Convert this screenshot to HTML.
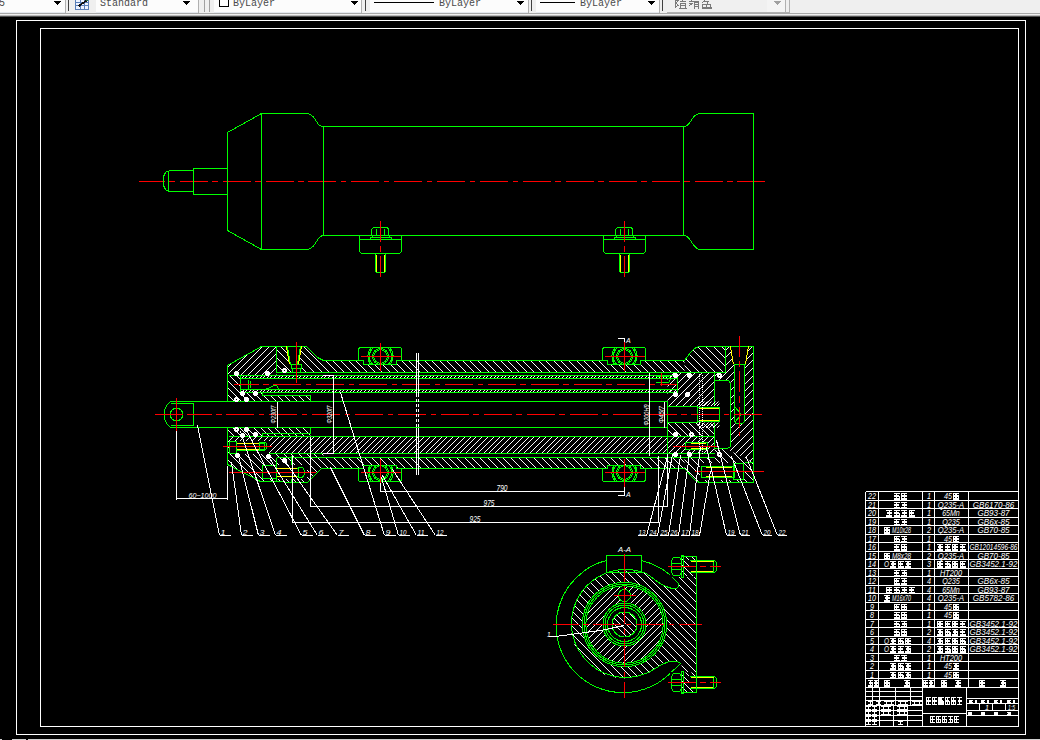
<!DOCTYPE html>
<html><head><meta charset="utf-8"><style>
html,body{margin:0;padding:0;background:#000;width:1040px;height:740px;overflow:hidden;position:relative;font-family:"Liberation Sans",sans-serif}
</style></head><body>
<svg width="1040" height="17" style="position:absolute;left:0;top:0" shape-rendering="crispEdges"><rect x="0" y="0" width="1040" height="13" fill="#efefef"/><rect x="0" y="13" width="1040" height="1" fill="#a8a8a8"/><rect x="0" y="14" width="1040" height="1" fill="#f0f0f0"/><rect x="0" y="15" width="1040" height="1" fill="#b8b8b8"/><rect x="0" y="16" width="1040" height="1" fill="#505050"/><rect x="0" y="0" width="65" height="12" fill="#fcfcfc"/><rect x="0" y="12" width="65" height="1" fill="#e4e8ee"/><rect x="65" y="0" width="1" height="13" fill="#b0b0b0"/><text x="-1" y="6" font-family="Liberation Mono, monospace" font-size="10" fill="#4a4a4a">5</text><path d="M54,1 h7 l-3.5,4z" fill="#000"/><rect x="68" y="0" width="1" height="11" fill="#404040"/><rect x="75" y="0" width="14" height="10" fill="#5a7fb8"/><rect x="76" y="0" width="4" height="2" fill="#eef3ff"/><rect x="76" y="3" width="4" height="2" fill="#eef3ff"/><rect x="76" y="6" width="4" height="2.5" fill="#eef3ff"/><rect x="81" y="0" width="3" height="2" fill="#eef3ff"/><rect x="81" y="3" width="3" height="2" fill="#eef3ff"/><rect x="81" y="6" width="3" height="2.5" fill="#eef3ff"/><rect x="85" y="0" width="3" height="2" fill="#eef3ff"/><rect x="85" y="3" width="3" height="2" fill="#eef3ff"/><rect x="85" y="6" width="3" height="2.5" fill="#eef3ff"/><path d="M78,5.5 L86,0 L87.5,0.8 L79.5,6.5z" fill="#111"/><rect x="86" y="0" width="2" height="1" fill="#2a6a3a"/><rect x="96" y="0" width="102" height="12" fill="#fcfcfc"/><rect x="96" y="12" width="102" height="1" fill="#e4e8ee"/><rect x="198" y="0" width="1" height="13" fill="#b0b0b0"/><text x="100" y="6" font-family="Liberation Mono, monospace" font-size="10" fill="#4a4a4a">Standard</text><path d="M183,1 h7 l-3.5,4z" fill="#000"/><rect x="204" y="0" width="1" height="12" fill="#a0a0a0"/><rect x="209" y="0" width="1" height="12" fill="#a0a0a0"/><rect x="214" y="0" width="147" height="12" fill="#fcfcfc"/><rect x="214" y="12" width="147" height="1" fill="#e4e8ee"/><rect x="361" y="0" width="1" height="13" fill="#b0b0b0"/><rect x="219.5" y="-3.5" width="9" height="10" fill="#fff" stroke="#000"/><text x="233" y="6" font-family="Liberation Mono, monospace" font-size="10" fill="#4a4a4a">ByLayer</text><path d="M351,1 h7 l-3.5,4z" fill="#000"/><rect x="365" y="0" width="1" height="11" fill="#404040"/><rect x="370" y="0" width="158" height="12" fill="#fcfcfc"/><rect x="370" y="12" width="158" height="1" fill="#e4e8ee"/><rect x="528" y="0" width="1" height="13" fill="#b0b0b0"/><rect x="374" y="2" width="60" height="1" fill="#000"/><text x="439" y="6" font-family="Liberation Mono, monospace" font-size="10" fill="#4a4a4a">ByLayer</text><path d="M517,1 h7 l-3.5,4z" fill="#000"/><rect x="531" y="0" width="1" height="11" fill="#404040"/><rect x="536" y="0" width="123" height="12" fill="#fcfcfc"/><rect x="536" y="12" width="123" height="1" fill="#e4e8ee"/><rect x="659" y="0" width="1" height="13" fill="#b0b0b0"/><rect x="540" y="2" width="35" height="1" fill="#000"/><text x="580" y="6" font-family="Liberation Mono, monospace" font-size="10" fill="#4a4a4a">ByLayer</text><path d="M648,1 h7 l-3.5,4z" fill="#000"/><rect x="662" y="0" width="1" height="11" fill="#404040"/><rect x="667" y="0" width="118" height="12" fill="#f0f0f0"/><rect x="767" y="0" width="18" height="12" fill="#f4f4f4"/><rect x="785" y="0" width="1" height="13" fill="#b0b0b0"/><rect x="789" y="0" width="1" height="13" fill="#b0b0b0"/><rect x="667" y="12" width="123" height="1" fill="#b0b0b0"/><path d="M774,1 h7 l-3.5,4z" fill="#a0a0a0"/><path d="M675.5,0v8M675.5,0.5h2.5l-1.5,2.5l1.5,2.5l-2,1.5M679.5,1.5h6M682.5,0v2M680,3.5h5v4.5h-5zM680,5.5h5M679,8.5h8M688.5,1.5h5M691,0v2M689,3h4l-4,3M693.5,1h5M696,1v1.5M694.5,2.5h4v4h-4zM694.5,4.5h4M695,7l-1,1.5M698,7l1,1.5M704.5,0l-2,3M703.5,1.5h5l-1.5,2M702.5,4h8v3.5h-8zM706.5,4v3.5M702.5,7.5v0.5h9v-1.5" stroke="#7a7a7a" stroke-width="1" fill="none" shape-rendering="crispEdges"/></svg>
<svg width="1040" height="723" viewBox="0 17 1040 723" style="position:absolute;left:0;top:17px" shape-rendering="crispEdges" font-family="Liberation Sans, sans-serif"><defs><clipPath id="h1"><path clip-rule="evenodd" d="M227.5,365.5L261.5,346.5L276.5,346.5L276.5,375.5L227.5,375.5Z"/></clipPath><clipPath id="h2"><path clip-rule="evenodd" d="M276.5,346.5L306.5,346.5L317.5,357.5L323.5,360.5L684.5,360.5L684.5,372.5L276.5,372.5ZM286.5,346.5L301.5,346.5L298.5,364.5L301.5,364.5L301.5,372.5L291.5,372.5L291.5,364.5L289.5,364.5Z"/></clipPath><clipPath id="h3"><path clip-rule="evenodd" d="M684.5,360.5 C688.5,356 690,352 694,349 C696,347 698,346.5 700.5,346.5 L725.5,346.5 L725.5,372.5 L684.5,372.5Z"/></clipPath><clipPath id="h4"><path clip-rule="evenodd" d="M240.5,375.5L677.5,375.5L677.5,378.5L240.5,378.5Z"/></clipPath><clipPath id="h5"><path clip-rule="evenodd" d="M240.5,389.5L677.5,389.5L677.5,392.5L240.5,392.5Z"/></clipPath><clipPath id="h6"><path clip-rule="evenodd" d="M227.5,375.5L240.5,375.5L240.5,392.5L262.5,392.5L262.5,395.5L310.5,395.5L310.5,401.5L227.5,401.5Z"/></clipPath><clipPath id="h7"><path clip-rule="evenodd" d="M227.5,427.5L310.5,427.5L310.5,436.5L227.5,436.5Z"/></clipPath><clipPath id="h8"><path clip-rule="evenodd" d="M227.5,436.5L714.5,436.5L714.5,453.5L227.5,453.5Z"/></clipPath><clipPath id="h9"><path clip-rule="evenodd" d="M227.5,453.5L323.5,453.5L323.5,457.5L684.5,457.5L684.5,468.5L321.5,468.5L307.5,482.5L260.5,482.5L227.5,464.5Z"/></clipPath><clipPath id="h10"><path clip-rule="evenodd" d="M684.5,468.5 C688.5,472 690,476 694,479 C696,481 698,482.5 700.5,482.5 L753.5,482.5 L753.5,462.5 L725.5,448.5 L714.5,448.5 L714.5,457.5 L684.5,457.5Z"/></clipPath><clipPath id="h11"><path clip-rule="evenodd" d="M667.5,372.5L714.5,372.5L714.5,406.5L667.5,406.5Z"/></clipPath><clipPath id="h12"><path clip-rule="evenodd" d="M667.5,422.5L714.5,422.5L714.5,436.5L667.5,436.5Z"/></clipPath><clipPath id="h13"><path clip-rule="evenodd" d="M714.5,372.5L725.5,372.5L725.5,346.5L753.5,346.5L753.5,462.5L725.5,448.5L714.5,448.5ZM714.5,380.5L730.5,380.5L730.5,448.5L714.5,448.5ZM734.5,364.5L744.5,364.5L744.5,423.5L734.5,423.5ZM730.5,346.5L748.5,346.5L745.5,364.5L733.5,364.5Z"/></clipPath><clipPath id="h14"><rect x="360" y="348" width="41" height="16"/></clipPath><clipPath id="h15"><rect x="360" y="465" width="41" height="16"/></clipPath><clipPath id="h16"><rect x="604" y="348" width="41" height="16"/></clipPath><clipPath id="h17"><rect x="604" y="465" width="41" height="16"/></clipPath><clipPath id="h18"><path clip-rule="evenodd" d="M697.5,401.5L719.5,401.5L719.5,406.5L697.5,406.5Z"/></clipPath><clipPath id="h19"><path clip-rule="evenodd" d="M697.5,422.5L719.5,422.5L719.5,428.5L697.5,428.5Z"/></clipPath><clipPath id="h20"><path d="M570.5,624.5a54,54 0 1,0 108,0a54,54 0 1,0 -108,0Z"/><path d="M643.5,572.5 L681.5,572.5 L681.5,556.5 L696.5,556.5 L696.5,692.5 L681.5,692.5 L681.5,664 C678,661 672,660.5 668,662 C663,663.5 659,666 656,668 L624,624Z"/></clipPath><mask id="h21"><rect x="0" y="0" width="1040" height="740" fill="#fff"/><circle cx="624.5" cy="624.5" r="42" fill="#000"/><path d="M641,560 A67,67 0 0,1 677.5,582.5 C680,585.5 679,588 675,588.5 C669,589 661,585 650,576 C647,574 645,573 643.5,572 Z" fill="#000"/></mask><mask id="h22"><circle cx="624.5" cy="624.5" r="38.7" fill="#fff"/><circle cx="624.5" cy="624.5" r="21" fill="#000"/><circle cx="624.5" cy="595.5" r="6" fill="#000"/></mask><clipPath id="h23"><circle cx="624.5" cy="624.5" r="12.5"/></clipPath><clipPath id="h24"><path clip-rule="evenodd" d="M681.5,556.5L696.5,556.5L696.5,576.5L681.5,576.5Z"/></clipPath><clipPath id="h25"><path clip-rule="evenodd" d="M681.5,672.5L696.5,672.5L696.5,692.5L681.5,692.5Z"/></clipPath></defs><rect x="16.5" y="20.5" width="1009" height="714" fill="none" stroke="#ffffff"/><rect x="40.5" y="28.5" width="978" height="698" fill="none" stroke="#ffffff"/><line x1="138.5" y1="181.5" x2="764.5" y2="181.5" stroke="#ff0000" stroke-dasharray="28 4.5 5.5 4.9" stroke-dashoffset="1.7"/><path d="M168.5,170.5 L165.5,172.5 L163.5,176.5 L163.5,185.5 L165.5,189.5 L168.5,191.5" fill="none" stroke="#00ff00"/><polyline points="168.5,170.5 193.5,170.5" fill="none" stroke="#00ff00"/><polyline points="168.5,191.5 193.5,191.5" fill="none" stroke="#00ff00"/><line x1="168.5" y1="170.5" x2="168.5" y2="191.5" stroke="#00ff00"/><rect x="193.5" y="168.5" width="34" height="26" fill="none" stroke="#00ff00"/><polyline points="227.5,132.5 261.5,113.5 306.5,113.5" fill="none" stroke="#00ff00"/><polyline points="227.5,230.5 261.5,249.5 306.5,249.5" fill="none" stroke="#00ff00"/><line x1="227.5" y1="132.5" x2="227.5" y2="230.5" stroke="#00ff00"/><line x1="261.5" y1="113.5" x2="261.5" y2="249.5" stroke="#00ff00"/><path d="M306.5,113.5 C312.5,113.5 314.5,118.5 316.5,121.5 C318.5,124.5 319.5,126.5 323.5,126.5" fill="none" stroke="#00ff00"/><path d="M306.5,249.5 C312.5,249.5 314.5,244.5 316.5,241.5 C318.5,238.5 319.5,235.5 323.5,235.5" fill="none" stroke="#00ff00"/><line x1="323.5" y1="126.5" x2="683.5" y2="126.5" stroke="#00ff00"/><line x1="323.5" y1="235.5" x2="683.5" y2="235.5" stroke="#00ff00"/><line x1="323.5" y1="126.5" x2="323.5" y2="235.5" stroke="#00ff00"/><line x1="683.5" y1="126.5" x2="683.5" y2="235.5" stroke="#00ff00"/><path d="M683.5,126.5 C688.5,126.5 690.5,121.5 692.5,118.5 C694.5,115.5 696.5,113.5 700.5,113.5" fill="none" stroke="#00ff00"/><path d="M683.5,235.5 C688.5,235.5 690.5,240.5 692.5,243.5 C694.5,246.5 696.5,249.5 700.5,249.5" fill="none" stroke="#00ff00"/><polyline points="700.5,113.5 753.5,113.5 753.5,249.5 700.5,249.5" fill="none" stroke="#00ff00"/><polyline points="359.5,235.5 359.5,251.5 361.5,253.5 399.5,253.5 401.5,251.5 401.5,235.5" fill="none" stroke="#00ff00"/><line x1="359.5" y1="239.5" x2="401.5" y2="239.5" stroke="#00ff00"/><polyline points="371.5,235.5 371.5,229.5 373.5,227.5 387.5,227.5 388.5,229.5 388.5,235.5" fill="none" stroke="#00ff00"/><line x1="376.5" y1="228.5" x2="376.5" y2="235.5" stroke="#00ff00"/><line x1="384.5" y1="228.5" x2="384.5" y2="235.5" stroke="#00ff00"/><rect x="372.5" y="235.5" width="17" height="2" fill="none" stroke="#00ff00"/><rect x="370.5" y="237.5" width="21" height="2" fill="none" stroke="#00ff00"/><polyline points="375.5,253.5 375.5,271.5 376.5,272.5 384.5,272.5 385.5,271.5 385.5,253.5" fill="none" stroke="#00ff00"/><line x1="376.5" y1="254.5" x2="376.5" y2="271.5" stroke="#ffff00"/><line x1="384.5" y1="254.5" x2="384.5" y2="271.5" stroke="#ffff00"/><line x1="380.5" y1="220.5" x2="380.5" y2="277.5" stroke="#ff0000" stroke-dasharray="21 4 6.6 4" stroke-dashoffset="0"/><polyline points="603.5,235.5 603.5,251.5 605.5,253.5 643.5,253.5 645.5,251.5 645.5,235.5" fill="none" stroke="#00ff00"/><line x1="603.5" y1="239.5" x2="645.5" y2="239.5" stroke="#00ff00"/><polyline points="615.5,235.5 615.5,229.5 617.5,227.5 631.5,227.5 632.5,229.5 632.5,235.5" fill="none" stroke="#00ff00"/><line x1="620.5" y1="228.5" x2="620.5" y2="235.5" stroke="#00ff00"/><line x1="628.5" y1="228.5" x2="628.5" y2="235.5" stroke="#00ff00"/><rect x="616.5" y="235.5" width="17" height="2" fill="none" stroke="#00ff00"/><rect x="614.5" y="237.5" width="21" height="2" fill="none" stroke="#00ff00"/><polyline points="619.5,253.5 619.5,271.5 620.5,272.5 628.5,272.5 629.5,271.5 629.5,253.5" fill="none" stroke="#00ff00"/><line x1="620.5" y1="254.5" x2="620.5" y2="271.5" stroke="#ffff00"/><line x1="628.5" y1="254.5" x2="628.5" y2="271.5" stroke="#ffff00"/><line x1="624.5" y1="220.5" x2="624.5" y2="277.5" stroke="#ff0000" stroke-dasharray="21 4 6.6 4" stroke-dashoffset="0"/><path clip-path="url(#h1)" d="M198.5,375.5L227.5,346.5M205.5,375.5L234.5,346.5M212.5,375.5L241.5,346.5M219.5,375.5L248.5,346.5M226.5,375.5L255.5,346.5M233.5,375.5L262.5,346.5M240.5,375.5L269.5,346.5M247.5,375.5L276.5,346.5M254.5,375.5L283.5,346.5M261.5,375.5L290.5,346.5M268.5,375.5L297.5,346.5M275.5,375.5L304.5,346.5M282.5,375.5L311.5,346.5" stroke="#ffffff" stroke-width="1" fill="none"/><path clip-path="url(#h2)" d="M250.5,346.5L276.5,372.5M258.5,346.5L284.5,372.5M265.5,346.5L291.5,372.5M273.5,346.5L299.5,372.5M280.5,346.5L306.5,372.5M288.5,346.5L314.5,372.5M296.5,346.5L322.5,372.5M303.5,346.5L329.5,372.5M311.5,346.5L337.5,372.5M318.5,346.5L344.5,372.5M326.5,346.5L352.5,372.5M334.5,346.5L360.5,372.5M341.5,346.5L367.5,372.5M349.5,346.5L375.5,372.5M356.5,346.5L382.5,372.5M364.5,346.5L390.5,372.5M372.5,346.5L398.5,372.5M379.5,346.5L405.5,372.5M387.5,346.5L413.5,372.5M394.5,346.5L420.5,372.5M402.5,346.5L428.5,372.5M410.5,346.5L436.5,372.5M417.5,346.5L443.5,372.5M425.5,346.5L451.5,372.5M432.5,346.5L458.5,372.5M440.5,346.5L466.5,372.5M448.5,346.5L474.5,372.5M455.5,346.5L481.5,372.5M463.5,346.5L489.5,372.5M470.5,346.5L496.5,372.5M478.5,346.5L504.5,372.5M486.5,346.5L512.5,372.5M493.5,346.5L519.5,372.5M501.5,346.5L527.5,372.5M508.5,346.5L534.5,372.5M516.5,346.5L542.5,372.5M524.5,346.5L550.5,372.5M531.5,346.5L557.5,372.5M539.5,346.5L565.5,372.5M546.5,346.5L572.5,372.5M554.5,346.5L580.5,372.5M562.5,346.5L588.5,372.5M569.5,346.5L595.5,372.5M577.5,346.5L603.5,372.5M584.5,346.5L610.5,372.5M592.5,346.5L618.5,372.5M600.5,346.5L626.5,372.5M607.5,346.5L633.5,372.5M615.5,346.5L641.5,372.5M622.5,346.5L648.5,372.5M630.5,346.5L656.5,372.5M638.5,346.5L664.5,372.5M645.5,346.5L671.5,372.5M653.5,346.5L679.5,372.5M660.5,346.5L686.5,372.5M668.5,346.5L694.5,372.5M676.5,346.5L702.5,372.5M683.5,346.5L709.5,372.5M691.5,346.5L717.5,372.5M698.5,346.5L724.5,372.5M706.5,346.5L732.5,372.5" stroke="#ffffff" stroke-width="1" fill="none"/><path clip-path="url(#h3)" d="M657.5,346.5L684.5,373.5M665.5,346.5L692.5,373.5M673.5,346.5L700.5,373.5M681.5,346.5L708.5,373.5M689.5,346.5L716.5,373.5M697.5,346.5L724.5,373.5M705.5,346.5L732.5,373.5M713.5,346.5L740.5,373.5M721.5,346.5L748.5,373.5M729.5,346.5L756.5,373.5" stroke="#ffffff" stroke-width="1" fill="none"/><path clip-path="url(#h4)" d="M237.5,378.5L240.5,375.5M241.5,378.5L244.5,375.5M244.5,378.5L247.5,375.5M248.5,378.5L251.5,375.5M251.5,378.5L254.5,375.5M255.5,378.5L258.5,375.5M259.5,378.5L262.5,375.5M262.5,378.5L265.5,375.5M266.5,378.5L269.5,375.5M269.5,378.5L272.5,375.5M273.5,378.5L276.5,375.5M277.5,378.5L280.5,375.5M280.5,378.5L283.5,375.5M284.5,378.5L287.5,375.5M287.5,378.5L290.5,375.5M291.5,378.5L294.5,375.5M295.5,378.5L298.5,375.5M298.5,378.5L301.5,375.5M302.5,378.5L305.5,375.5M305.5,378.5L308.5,375.5M309.5,378.5L312.5,375.5M313.5,378.5L316.5,375.5M316.5,378.5L319.5,375.5M320.5,378.5L323.5,375.5M323.5,378.5L326.5,375.5M327.5,378.5L330.5,375.5M331.5,378.5L334.5,375.5M334.5,378.5L337.5,375.5M338.5,378.5L341.5,375.5M341.5,378.5L344.5,375.5M345.5,378.5L348.5,375.5M349.5,378.5L352.5,375.5M352.5,378.5L355.5,375.5M356.5,378.5L359.5,375.5M359.5,378.5L362.5,375.5M363.5,378.5L366.5,375.5M367.5,378.5L370.5,375.5M370.5,378.5L373.5,375.5M374.5,378.5L377.5,375.5M377.5,378.5L380.5,375.5M381.5,378.5L384.5,375.5M385.5,378.5L388.5,375.5M388.5,378.5L391.5,375.5M392.5,378.5L395.5,375.5M395.5,378.5L398.5,375.5M399.5,378.5L402.5,375.5M403.5,378.5L406.5,375.5M406.5,378.5L409.5,375.5M410.5,378.5L413.5,375.5M413.5,378.5L416.5,375.5M417.5,378.5L420.5,375.5M421.5,378.5L424.5,375.5M424.5,378.5L427.5,375.5M428.5,378.5L431.5,375.5M431.5,378.5L434.5,375.5M435.5,378.5L438.5,375.5M439.5,378.5L442.5,375.5M442.5,378.5L445.5,375.5M446.5,378.5L449.5,375.5M449.5,378.5L452.5,375.5M453.5,378.5L456.5,375.5M457.5,378.5L460.5,375.5M460.5,378.5L463.5,375.5M464.5,378.5L467.5,375.5M467.5,378.5L470.5,375.5M471.5,378.5L474.5,375.5M475.5,378.5L478.5,375.5M478.5,378.5L481.5,375.5M482.5,378.5L485.5,375.5M485.5,378.5L488.5,375.5M489.5,378.5L492.5,375.5M493.5,378.5L496.5,375.5M496.5,378.5L499.5,375.5M500.5,378.5L503.5,375.5M503.5,378.5L506.5,375.5M507.5,378.5L510.5,375.5M511.5,378.5L514.5,375.5M514.5,378.5L517.5,375.5M518.5,378.5L521.5,375.5M521.5,378.5L524.5,375.5M525.5,378.5L528.5,375.5M529.5,378.5L532.5,375.5M532.5,378.5L535.5,375.5M536.5,378.5L539.5,375.5M539.5,378.5L542.5,375.5M543.5,378.5L546.5,375.5M547.5,378.5L550.5,375.5M550.5,378.5L553.5,375.5M554.5,378.5L557.5,375.5M557.5,378.5L560.5,375.5M561.5,378.5L564.5,375.5M565.5,378.5L568.5,375.5M568.5,378.5L571.5,375.5M572.5,378.5L575.5,375.5M575.5,378.5L578.5,375.5M579.5,378.5L582.5,375.5M583.5,378.5L586.5,375.5M586.5,378.5L589.5,375.5M590.5,378.5L593.5,375.5M593.5,378.5L596.5,375.5M597.5,378.5L600.5,375.5M601.5,378.5L604.5,375.5M604.5,378.5L607.5,375.5M608.5,378.5L611.5,375.5M611.5,378.5L614.5,375.5M615.5,378.5L618.5,375.5M619.5,378.5L622.5,375.5M622.5,378.5L625.5,375.5M626.5,378.5L629.5,375.5M629.5,378.5L632.5,375.5M633.5,378.5L636.5,375.5M637.5,378.5L640.5,375.5M640.5,378.5L643.5,375.5M644.5,378.5L647.5,375.5M647.5,378.5L650.5,375.5M651.5,378.5L654.5,375.5M655.5,378.5L658.5,375.5M658.5,378.5L661.5,375.5M662.5,378.5L665.5,375.5M665.5,378.5L668.5,375.5M669.5,378.5L672.5,375.5M673.5,378.5L676.5,375.5M676.5,378.5L679.5,375.5M680.5,378.5L683.5,375.5" stroke="#ffffff" stroke-width="1" fill="none"/><path clip-path="url(#h5)" d="M237.5,392.5L240.5,389.5M241.5,392.5L244.5,389.5M244.5,392.5L247.5,389.5M248.5,392.5L251.5,389.5M251.5,392.5L254.5,389.5M255.5,392.5L258.5,389.5M259.5,392.5L262.5,389.5M262.5,392.5L265.5,389.5M266.5,392.5L269.5,389.5M269.5,392.5L272.5,389.5M273.5,392.5L276.5,389.5M277.5,392.5L280.5,389.5M280.5,392.5L283.5,389.5M284.5,392.5L287.5,389.5M287.5,392.5L290.5,389.5M291.5,392.5L294.5,389.5M295.5,392.5L298.5,389.5M298.5,392.5L301.5,389.5M302.5,392.5L305.5,389.5M305.5,392.5L308.5,389.5M309.5,392.5L312.5,389.5M313.5,392.5L316.5,389.5M316.5,392.5L319.5,389.5M320.5,392.5L323.5,389.5M323.5,392.5L326.5,389.5M327.5,392.5L330.5,389.5M331.5,392.5L334.5,389.5M334.5,392.5L337.5,389.5M338.5,392.5L341.5,389.5M341.5,392.5L344.5,389.5M345.5,392.5L348.5,389.5M349.5,392.5L352.5,389.5M352.5,392.5L355.5,389.5M356.5,392.5L359.5,389.5M359.5,392.5L362.5,389.5M363.5,392.5L366.5,389.5M367.5,392.5L370.5,389.5M370.5,392.5L373.5,389.5M374.5,392.5L377.5,389.5M377.5,392.5L380.5,389.5M381.5,392.5L384.5,389.5M385.5,392.5L388.5,389.5M388.5,392.5L391.5,389.5M392.5,392.5L395.5,389.5M395.5,392.5L398.5,389.5M399.5,392.5L402.5,389.5M403.5,392.5L406.5,389.5M406.5,392.5L409.5,389.5M410.5,392.5L413.5,389.5M413.5,392.5L416.5,389.5M417.5,392.5L420.5,389.5M421.5,392.5L424.5,389.5M424.5,392.5L427.5,389.5M428.5,392.5L431.5,389.5M431.5,392.5L434.5,389.5M435.5,392.5L438.5,389.5M439.5,392.5L442.5,389.5M442.5,392.5L445.5,389.5M446.5,392.5L449.5,389.5M449.5,392.5L452.5,389.5M453.5,392.5L456.5,389.5M457.5,392.5L460.5,389.5M460.5,392.5L463.5,389.5M464.5,392.5L467.5,389.5M467.5,392.5L470.5,389.5M471.5,392.5L474.5,389.5M475.5,392.5L478.5,389.5M478.5,392.5L481.5,389.5M482.5,392.5L485.5,389.5M485.5,392.5L488.5,389.5M489.5,392.5L492.5,389.5M493.5,392.5L496.5,389.5M496.5,392.5L499.5,389.5M500.5,392.5L503.5,389.5M503.5,392.5L506.5,389.5M507.5,392.5L510.5,389.5M511.5,392.5L514.5,389.5M514.5,392.5L517.5,389.5M518.5,392.5L521.5,389.5M521.5,392.5L524.5,389.5M525.5,392.5L528.5,389.5M529.5,392.5L532.5,389.5M532.5,392.5L535.5,389.5M536.5,392.5L539.5,389.5M539.5,392.5L542.5,389.5M543.5,392.5L546.5,389.5M547.5,392.5L550.5,389.5M550.5,392.5L553.5,389.5M554.5,392.5L557.5,389.5M557.5,392.5L560.5,389.5M561.5,392.5L564.5,389.5M565.5,392.5L568.5,389.5M568.5,392.5L571.5,389.5M572.5,392.5L575.5,389.5M575.5,392.5L578.5,389.5M579.5,392.5L582.5,389.5M583.5,392.5L586.5,389.5M586.5,392.5L589.5,389.5M590.5,392.5L593.5,389.5M593.5,392.5L596.5,389.5M597.5,392.5L600.5,389.5M601.5,392.5L604.5,389.5M604.5,392.5L607.5,389.5M608.5,392.5L611.5,389.5M611.5,392.5L614.5,389.5M615.5,392.5L618.5,389.5M619.5,392.5L622.5,389.5M622.5,392.5L625.5,389.5M626.5,392.5L629.5,389.5M629.5,392.5L632.5,389.5M633.5,392.5L636.5,389.5M637.5,392.5L640.5,389.5M640.5,392.5L643.5,389.5M644.5,392.5L647.5,389.5M647.5,392.5L650.5,389.5M651.5,392.5L654.5,389.5M655.5,392.5L658.5,389.5M658.5,392.5L661.5,389.5M662.5,392.5L665.5,389.5M665.5,392.5L668.5,389.5M669.5,392.5L672.5,389.5M673.5,392.5L676.5,389.5M676.5,392.5L679.5,389.5M680.5,392.5L683.5,389.5" stroke="#ffffff" stroke-width="1" fill="none"/><path clip-path="url(#h6)" d="M201.5,375.5L227.5,401.5M208.5,375.5L234.5,401.5M215.5,375.5L241.5,401.5M222.5,375.5L248.5,401.5M229.5,375.5L255.5,401.5M236.5,375.5L262.5,401.5M243.5,375.5L269.5,401.5M250.5,375.5L276.5,401.5M257.5,375.5L283.5,401.5M264.5,375.5L290.5,401.5M271.5,375.5L297.5,401.5M278.5,375.5L304.5,401.5M285.5,375.5L311.5,401.5M292.5,375.5L318.5,401.5M299.5,375.5L325.5,401.5M306.5,375.5L332.5,401.5M313.5,375.5L339.5,401.5" stroke="#ffffff" stroke-width="1" fill="none"/><path clip-path="url(#h7)" d="M218.5,427.5L227.5,436.5M225.5,427.5L234.5,436.5M232.5,427.5L241.5,436.5M239.5,427.5L248.5,436.5M246.5,427.5L255.5,436.5M253.5,427.5L262.5,436.5M260.5,427.5L269.5,436.5M267.5,427.5L276.5,436.5M274.5,427.5L283.5,436.5M281.5,427.5L290.5,436.5M288.5,427.5L297.5,436.5M295.5,427.5L304.5,436.5M302.5,427.5L311.5,436.5M309.5,427.5L318.5,436.5M316.5,427.5L325.5,436.5" stroke="#ffffff" stroke-width="1" fill="none"/><path clip-path="url(#h8)" d="M210.5,453.5L227.5,436.5M216.5,453.5L233.5,436.5M222.5,453.5L239.5,436.5M227.5,453.5L244.5,436.5M233.5,453.5L250.5,436.5M239.5,453.5L256.5,436.5M245.5,453.5L262.5,436.5M251.5,453.5L268.5,436.5M256.5,453.5L273.5,436.5M262.5,453.5L279.5,436.5M268.5,453.5L285.5,436.5M274.5,453.5L291.5,436.5M280.5,453.5L297.5,436.5M285.5,453.5L302.5,436.5M291.5,453.5L308.5,436.5M297.5,453.5L314.5,436.5M303.5,453.5L320.5,436.5M309.5,453.5L326.5,436.5M314.5,453.5L331.5,436.5M320.5,453.5L337.5,436.5M326.5,453.5L343.5,436.5M332.5,453.5L349.5,436.5M338.5,453.5L355.5,436.5M343.5,453.5L360.5,436.5M349.5,453.5L366.5,436.5M355.5,453.5L372.5,436.5M361.5,453.5L378.5,436.5M367.5,453.5L384.5,436.5M372.5,453.5L389.5,436.5M378.5,453.5L395.5,436.5M384.5,453.5L401.5,436.5M390.5,453.5L407.5,436.5M396.5,453.5L413.5,436.5M401.5,453.5L418.5,436.5M407.5,453.5L424.5,436.5M413.5,453.5L430.5,436.5M419.5,453.5L436.5,436.5M425.5,453.5L442.5,436.5M430.5,453.5L447.5,436.5M436.5,453.5L453.5,436.5M442.5,453.5L459.5,436.5M448.5,453.5L465.5,436.5M454.5,453.5L471.5,436.5M459.5,453.5L476.5,436.5M465.5,453.5L482.5,436.5M471.5,453.5L488.5,436.5M477.5,453.5L494.5,436.5M483.5,453.5L500.5,436.5M488.5,453.5L505.5,436.5M494.5,453.5L511.5,436.5M500.5,453.5L517.5,436.5M506.5,453.5L523.5,436.5M512.5,453.5L529.5,436.5M517.5,453.5L534.5,436.5M523.5,453.5L540.5,436.5M529.5,453.5L546.5,436.5M535.5,453.5L552.5,436.5M541.5,453.5L558.5,436.5M546.5,453.5L563.5,436.5M552.5,453.5L569.5,436.5M558.5,453.5L575.5,436.5M564.5,453.5L581.5,436.5M570.5,453.5L587.5,436.5M575.5,453.5L592.5,436.5M581.5,453.5L598.5,436.5M587.5,453.5L604.5,436.5M593.5,453.5L610.5,436.5M599.5,453.5L616.5,436.5M604.5,453.5L621.5,436.5M610.5,453.5L627.5,436.5M616.5,453.5L633.5,436.5M622.5,453.5L639.5,436.5M628.5,453.5L645.5,436.5M633.5,453.5L650.5,436.5M639.5,453.5L656.5,436.5M645.5,453.5L662.5,436.5M651.5,453.5L668.5,436.5M657.5,453.5L674.5,436.5M662.5,453.5L679.5,436.5M668.5,453.5L685.5,436.5M674.5,453.5L691.5,436.5M680.5,453.5L697.5,436.5M686.5,453.5L703.5,436.5M691.5,453.5L708.5,436.5M697.5,453.5L714.5,436.5M703.5,453.5L720.5,436.5M709.5,453.5L726.5,436.5M715.5,453.5L732.5,436.5" stroke="#ffffff" stroke-width="1" fill="none"/><path clip-path="url(#h9)" d="M198.5,453.5L227.5,482.5M206.5,453.5L235.5,482.5M213.5,453.5L242.5,482.5M221.5,453.5L250.5,482.5M229.5,453.5L258.5,482.5M236.5,453.5L265.5,482.5M244.5,453.5L273.5,482.5M252.5,453.5L281.5,482.5M260.5,453.5L289.5,482.5M267.5,453.5L296.5,482.5M275.5,453.5L304.5,482.5M283.5,453.5L312.5,482.5M290.5,453.5L319.5,482.5M298.5,453.5L327.5,482.5M306.5,453.5L335.5,482.5M313.5,453.5L342.5,482.5M321.5,453.5L350.5,482.5M329.5,453.5L358.5,482.5M337.5,453.5L366.5,482.5M344.5,453.5L373.5,482.5M352.5,453.5L381.5,482.5M360.5,453.5L389.5,482.5M367.5,453.5L396.5,482.5M375.5,453.5L404.5,482.5M383.5,453.5L412.5,482.5M390.5,453.5L419.5,482.5M398.5,453.5L427.5,482.5M406.5,453.5L435.5,482.5M414.5,453.5L443.5,482.5M421.5,453.5L450.5,482.5M429.5,453.5L458.5,482.5M437.5,453.5L466.5,482.5M444.5,453.5L473.5,482.5M452.5,453.5L481.5,482.5M460.5,453.5L489.5,482.5M467.5,453.5L496.5,482.5M475.5,453.5L504.5,482.5M483.5,453.5L512.5,482.5M491.5,453.5L520.5,482.5M498.5,453.5L527.5,482.5M506.5,453.5L535.5,482.5M514.5,453.5L543.5,482.5M521.5,453.5L550.5,482.5M529.5,453.5L558.5,482.5M537.5,453.5L566.5,482.5M544.5,453.5L573.5,482.5M552.5,453.5L581.5,482.5M560.5,453.5L589.5,482.5M568.5,453.5L597.5,482.5M575.5,453.5L604.5,482.5M583.5,453.5L612.5,482.5M591.5,453.5L620.5,482.5M598.5,453.5L627.5,482.5M606.5,453.5L635.5,482.5M614.5,453.5L643.5,482.5M621.5,453.5L650.5,482.5M629.5,453.5L658.5,482.5M637.5,453.5L666.5,482.5M645.5,453.5L674.5,482.5M652.5,453.5L681.5,482.5M660.5,453.5L689.5,482.5M668.5,453.5L697.5,482.5M675.5,453.5L704.5,482.5M683.5,453.5L712.5,482.5M691.5,453.5L720.5,482.5M698.5,453.5L727.5,482.5M706.5,453.5L735.5,482.5" stroke="#ffffff" stroke-width="1" fill="none"/><path clip-path="url(#h10)" d="M641.5,440.5L684.5,483.5M649.5,440.5L692.5,483.5M657.5,440.5L700.5,483.5M665.5,440.5L708.5,483.5M673.5,440.5L716.5,483.5M681.5,440.5L724.5,483.5M689.5,440.5L732.5,483.5M697.5,440.5L740.5,483.5M705.5,440.5L748.5,483.5M713.5,440.5L756.5,483.5M721.5,440.5L764.5,483.5M729.5,440.5L772.5,483.5M737.5,440.5L780.5,483.5M745.5,440.5L788.5,483.5M753.5,440.5L796.5,483.5M761.5,440.5L804.5,483.5" stroke="#ffffff" stroke-width="1" fill="none"/><path clip-path="url(#h11)" d="M633.5,406.5L667.5,372.5M640.5,406.5L674.5,372.5M647.5,406.5L681.5,372.5M654.5,406.5L688.5,372.5M661.5,406.5L695.5,372.5M668.5,406.5L702.5,372.5M675.5,406.5L709.5,372.5M682.5,406.5L716.5,372.5M689.5,406.5L723.5,372.5M696.5,406.5L730.5,372.5M703.5,406.5L737.5,372.5M710.5,406.5L744.5,372.5M717.5,406.5L751.5,372.5" stroke="#ffffff" stroke-width="1" fill="none"/><path clip-path="url(#h12)" d="M653.5,422.5L667.5,436.5M660.5,422.5L674.5,436.5M667.5,422.5L681.5,436.5M674.5,422.5L688.5,436.5M681.5,422.5L695.5,436.5M688.5,422.5L702.5,436.5M695.5,422.5L709.5,436.5M702.5,422.5L716.5,436.5M709.5,422.5L723.5,436.5M716.5,422.5L730.5,436.5" stroke="#ffffff" stroke-width="1" fill="none"/><path clip-path="url(#h13)" d="M597.5,463.5L714.5,346.5M605.5,463.5L722.5,346.5M612.5,463.5L729.5,346.5M619.5,463.5L736.5,346.5M627.5,463.5L744.5,346.5M635.5,463.5L752.5,346.5M642.5,463.5L759.5,346.5M649.5,463.5L766.5,346.5M657.5,463.5L774.5,346.5M665.5,463.5L782.5,346.5M672.5,463.5L789.5,346.5M679.5,463.5L796.5,346.5M687.5,463.5L804.5,346.5M695.5,463.5L812.5,346.5M702.5,463.5L819.5,346.5M709.5,463.5L826.5,346.5M717.5,463.5L834.5,346.5M725.5,463.5L842.5,346.5M732.5,463.5L849.5,346.5M739.5,463.5L856.5,346.5M747.5,463.5L864.5,346.5M755.5,463.5L872.5,346.5" stroke="#ffffff" stroke-width="1" fill="none"/><polyline points="227.5,401.5 227.5,365.5 261.5,346.5 306.5,346.5 317.5,357.5 323.5,360.5 684.5,360.5" fill="none" stroke="#00ff00"/><line x1="276.5" y1="346.5" x2="276.5" y2="372.5" stroke="#00ff00"/><line x1="276.5" y1="372.5" x2="684.5" y2="372.5" stroke="#00ff00"/><line x1="228.5" y1="375.5" x2="677.5" y2="375.5" stroke="#00ff00"/><line x1="240.5" y1="378.5" x2="677.5" y2="378.5" stroke="#00ff00"/><line x1="240.5" y1="389.5" x2="677.5" y2="389.5" stroke="#00ff00"/><line x1="240.5" y1="392.5" x2="677.5" y2="392.5" stroke="#00ff00"/><line x1="240.5" y1="375.5" x2="240.5" y2="392.5" stroke="#00ff00"/><line x1="248.5" y1="379.5" x2="248.5" y2="388.5" stroke="#00ff00"/><line x1="250.5" y1="380.5" x2="250.5" y2="387.5" stroke="#00ff00"/><polyline points="262.5,392.5 262.5,395.5 310.5,395.5 310.5,401.5" fill="none" stroke="#00ff00"/><polyline points="265.5,389.5 276.5,384.5 278.5,389.5" fill="none" stroke="#00ff00"/><line x1="286.5" y1="346.5" x2="289.5" y2="364.5" stroke="#ffff00"/><line x1="301.5" y1="346.5" x2="298.5" y2="364.5" stroke="#ffff00"/><line x1="287.5" y1="346.5" x2="290.5" y2="364.5" stroke="#00ff00"/><line x1="300.5" y1="346.5" x2="297.5" y2="364.5" stroke="#00ff00"/><polyline points="289.5,364.5 298.5,364.5" fill="none" stroke="#00ff00"/><rect x="291.5" y="364.5" width="10" height="4" fill="none" stroke="#00ff00"/><polyline points="292.5,368.5 292.5,372.5" fill="none" stroke="#00ff00"/><polyline points="300.5,368.5 300.5,372.5" fill="none" stroke="#00ff00"/><line x1="296.5" y1="341.5" x2="296.5" y2="382.5" stroke="#ff0000"/><line x1="193.5" y1="401.5" x2="667.5" y2="401.5" stroke="#00ff00"/><line x1="193.5" y1="427.5" x2="667.5" y2="427.5" stroke="#00ff00"/><line x1="227.5" y1="427.5" x2="227.5" y2="464.5" stroke="#00ff00"/><polyline points="262.5,436.5 262.5,433.5 310.5,433.5 310.5,427.5" fill="none" stroke="#00ff00"/><line x1="228.5" y1="436.5" x2="714.5" y2="436.5" stroke="#00ff00"/><line x1="228.5" y1="453.5" x2="714.5" y2="453.5" stroke="#00ff00"/><line x1="276.5" y1="457.5" x2="714.5" y2="457.5" stroke="#00ff00"/><line x1="323.5" y1="468.5" x2="684.5" y2="468.5" stroke="#00ff00"/><polyline points="227.5,464.5 260.5,481.5 307.5,482.5 321.5,468.5 323.5,468.5" fill="none" stroke="#00ff00"/><line x1="276.5" y1="457.5" x2="276.5" y2="481.5" stroke="#00ff00"/><line x1="291.5" y1="455.5" x2="291.5" y2="481.5" stroke="#00ff00"/><polyline points="193.5,401.5 170.5,401.5 167.5,404.5 164.5,409.5 164.5,419.5 167.5,424.5 170.5,427.5 193.5,427.5" fill="none" stroke="#00ff00"/><polyline points="170.5,403.5 193.5,403.5 193.5,425.5 170.5,425.5" fill="none" stroke="#00ff00"/><circle cx="176.5" cy="414.5" r="6.3" fill="none" stroke="#00ff00"/><line x1="176.5" y1="397.5" x2="176.5" y2="430.5" stroke="#ff0000"/><line x1="154.5" y1="414.5" x2="182.5" y2="414.5" stroke="#ff0000"/><line x1="186.5" y1="414.5" x2="667.5" y2="414.5" stroke="#ff0000" stroke-dasharray="28 4.5 5.5 4.9" stroke-dashoffset="3"/><line x1="233.5" y1="384.5" x2="677.5" y2="384.5" stroke="#ff0000" stroke-dasharray="28 4.5 5.5 4.9" stroke-dashoffset="3"/><rect x="229" y="441" width="40" height="13" fill="#000" stroke="none"/><rect x="262" y="465" width="45" height="14" fill="#000" stroke="none"/><rect x="229.5" y="441.5" width="7" height="12" fill="none" stroke="#00ff00"/><rect x="236.5" y="443.5" width="28" height="7" fill="none" stroke="#00ff00"/><line x1="236.5" y1="443.5" x2="259.5" y2="443.5" stroke="#ffff00"/><line x1="236.5" y1="449.5" x2="259.5" y2="449.5" stroke="#ffff00"/><path d="M259.5,442.5 L265.5,442.5 Q268.5,446 265.5,449.5 L259.5,449.5 Z" fill="none" stroke="#00ff00"/><line x1="222.5" y1="446.5" x2="271.5" y2="446.5" stroke="#ff0000"/><rect x="262.5" y="465.5" width="14" height="13" fill="none" stroke="#00ff00"/><rect x="276.5" y="468.5" width="22" height="8" fill="none" stroke="#00ff00"/><line x1="276.5" y1="468.5" x2="296.5" y2="468.5" stroke="#ffff00"/><line x1="276.5" y1="476.5" x2="296.5" y2="476.5" stroke="#ffff00"/><path d="M298.5,467.5 L302.5,467.5 Q306.5,472 302.5,477.5 L298.5,477.5 Z" fill="none" stroke="#00ff00"/><line x1="228.5" y1="472.5" x2="315.5" y2="472.5" stroke="#ff0000"/><path d="M684.5,360.5 C688.5,356 690,352 694,349 C696,347 698,346.5 700.5,346.5 L753.5,346.5 L753.5,482.5 L700.5,482.5 C698,482.5 696,481 694,479 C690,476 688.5,472 684.5,468.5" fill="none" stroke="#00ff00"/><line x1="725.5" y1="346.5" x2="725.5" y2="372.5" stroke="#00ff00"/><line x1="649.5" y1="372.5" x2="725.5" y2="372.5" stroke="#00ff00"/><line x1="714.5" y1="372.5" x2="714.5" y2="448.5" stroke="#00ff00"/><polyline points="714.5,380.5 728.5,380.5 730.5,383.5 730.5,446.5 727.5,448.5 714.5,448.5" fill="none" stroke="#00ff00"/><line x1="730.5" y1="346.5" x2="733.5" y2="364.5" stroke="#ffff00"/><line x1="748.5" y1="346.5" x2="745.5" y2="364.5" stroke="#ffff00"/><polyline points="733.5,364.5 745.5,364.5" fill="none" stroke="#00ff00"/><polyline points="734.5,364.5 734.5,421.5 736.5,423.5 742.5,423.5 744.5,421.5 744.5,364.5" fill="none" stroke="#00ff00"/><polyline points="734.5,406.5 741.5,414.5 734.5,422.5" fill="none" stroke="#00ff00"/><line x1="739.5" y1="335.5" x2="739.5" y2="435.5" stroke="#ff0000" stroke-dasharray="21 4 6.6 4" stroke-dashoffset="0"/><line x1="744.5" y1="462.5" x2="753.5" y2="462.5" stroke="#00ff00"/><rect x="668" y="406" width="52" height="17" fill="#000" stroke="none"/><line x1="667.5" y1="401.5" x2="667.5" y2="453.5" stroke="#00ff00"/><line x1="667.5" y1="406.5" x2="697.5" y2="406.5" stroke="#00ff00"/><line x1="667.5" y1="422.5" x2="697.5" y2="422.5" stroke="#00ff00"/><rect x="697.5" y="407.5" width="22" height="14" fill="none" stroke="#00ff00"/><line x1="698.5" y1="408.5" x2="718.5" y2="408.5" stroke="#ffff00"/><line x1="698.5" y1="420.5" x2="718.5" y2="420.5" stroke="#ffff00"/><line x1="649.5" y1="414.5" x2="763.5" y2="414.5" stroke="#ff0000" stroke-dasharray="28 4.5 5.5 4.9" stroke-dashoffset="1"/><polyline points="655.5,376.5 668.5,376.5 670.5,379.5 668.5,382.5 655.5,382.5" fill="none" stroke="#00ff00"/><line x1="661.5" y1="372.5" x2="661.5" y2="385.5" stroke="#ff0000"/><line x1="677.5" y1="375.5" x2="677.5" y2="392.5" stroke="#00ff00"/><rect x="700" y="463" width="44" height="17" fill="#000" stroke="none"/><rect x="685" y="442" width="23" height="8" fill="#000" stroke="none"/><rect x="701.5" y="466.5" width="33" height="11" fill="none" stroke="#00ff00"/><rect x="733.5" y="463.5" width="10" height="16" fill="none" stroke="#00ff00"/><line x1="705.5" y1="467.5" x2="731.5" y2="467.5" stroke="#ffff00"/><line x1="705.5" y1="476.5" x2="731.5" y2="476.5" stroke="#ffff00"/><line x1="694.5" y1="471.5" x2="763.5" y2="471.5" stroke="#ff0000"/><rect x="685.5" y="442.5" width="22" height="7" fill="none" stroke="#00ff00"/><line x1="690.5" y1="443.5" x2="705.5" y2="443.5" stroke="#ffff00"/><line x1="690.5" y1="448.5" x2="705.5" y2="448.5" stroke="#ffff00"/><line x1="672.5" y1="446.5" x2="718.5" y2="446.5" stroke="#ff0000"/><rect x="359" y="348" width="43" height="12" fill="#000" stroke="none"/><rect x="364" y="360" width="32" height="4" fill="#000" stroke="none"/><path d="M358.5,360.5 L358.5,350 Q358.5,347.5 361,347.5 L399,347.5 Q401.5,347.5 401.5,350 L401.5,360.5" fill="none" stroke="#00ff00"/><polyline points="358.5,360.5 363.5,360.5 363.5,364.5 396.5,364.5 396.5,360.5 402.5,360.5" fill="none" stroke="#00ff00"/><g clip-path="url(#h14)"><circle cx="380.5" cy="356.5" r="6.8" fill="none" stroke="#00ff00"/><circle cx="380.5" cy="356.5" r="8.0" fill="none" stroke="#00ff00"/><circle cx="380.5" cy="356.5" r="11.2" fill="none" stroke="#00ff00"/><circle cx="380.5" cy="356.5" r="12.6" fill="none" stroke="#00ff00"/></g><line x1="360.5" y1="356.5" x2="400.5" y2="356.5" stroke="#ff0000"/><line x1="380.5" y1="342.5" x2="380.5" y2="370.5" stroke="#ff0000"/><rect x="359" y="469" width="43" height="12" fill="#000" stroke="none"/><rect x="364" y="465" width="32" height="4" fill="#000" stroke="none"/><path d="M358.5,468.5 L358.5,479 Q358.5,481.5 361,481.5 L399,481.5 Q401.5,481.5 401.5,479 L401.5,468.5" fill="none" stroke="#00ff00"/><polyline points="358.5,468.5 363.5,468.5 363.5,465.5 396.5,465.5 396.5,468.5 402.5,468.5" fill="none" stroke="#00ff00"/><g clip-path="url(#h15)"><circle cx="380.5" cy="472.5" r="6.8" fill="none" stroke="#00ff00"/><circle cx="380.5" cy="472.5" r="8.0" fill="none" stroke="#00ff00"/><circle cx="380.5" cy="472.5" r="11.2" fill="none" stroke="#00ff00"/><circle cx="380.5" cy="472.5" r="12.6" fill="none" stroke="#00ff00"/></g><line x1="360.5" y1="472.5" x2="400.5" y2="472.5" stroke="#ff0000"/><line x1="380.5" y1="458.5" x2="380.5" y2="486.5" stroke="#ff0000"/><rect x="603" y="348" width="43" height="12" fill="#000" stroke="none"/><rect x="608" y="360" width="32" height="4" fill="#000" stroke="none"/><path d="M602.5,360.5 L602.5,350 Q602.5,347.5 605,347.5 L643,347.5 Q645.5,347.5 645.5,350 L645.5,360.5" fill="none" stroke="#00ff00"/><polyline points="602.5,360.5 607.5,360.5 607.5,364.5 640.5,364.5 640.5,360.5 646.5,360.5" fill="none" stroke="#00ff00"/><g clip-path="url(#h16)"><circle cx="624.5" cy="356.5" r="6.8" fill="none" stroke="#00ff00"/><circle cx="624.5" cy="356.5" r="8.0" fill="none" stroke="#00ff00"/><circle cx="624.5" cy="356.5" r="11.2" fill="none" stroke="#00ff00"/><circle cx="624.5" cy="356.5" r="12.6" fill="none" stroke="#00ff00"/></g><line x1="604.5" y1="356.5" x2="644.5" y2="356.5" stroke="#ff0000"/><line x1="624.5" y1="342.5" x2="624.5" y2="370.5" stroke="#ff0000"/><rect x="603" y="469" width="43" height="12" fill="#000" stroke="none"/><rect x="608" y="465" width="32" height="4" fill="#000" stroke="none"/><path d="M602.5,468.5 L602.5,479 Q602.5,481.5 605,481.5 L643,481.5 Q645.5,481.5 645.5,479 L645.5,468.5" fill="none" stroke="#00ff00"/><polyline points="602.5,468.5 607.5,468.5 607.5,465.5 640.5,465.5 640.5,468.5 646.5,468.5" fill="none" stroke="#00ff00"/><g clip-path="url(#h17)"><circle cx="624.5" cy="472.5" r="6.8" fill="none" stroke="#00ff00"/><circle cx="624.5" cy="472.5" r="8.0" fill="none" stroke="#00ff00"/><circle cx="624.5" cy="472.5" r="11.2" fill="none" stroke="#00ff00"/><circle cx="624.5" cy="472.5" r="12.6" fill="none" stroke="#00ff00"/></g><line x1="604.5" y1="472.5" x2="644.5" y2="472.5" stroke="#ff0000"/><line x1="624.5" y1="458.5" x2="624.5" y2="486.5" stroke="#ff0000"/><polyline points="176.5,430.5 176.5,499.5" fill="none" stroke="#ffffff"/><polyline points="176.5,498.5 227.5,498.5" fill="none" stroke="#ffffff"/><polyline points="227.5,465.5 227.5,499.5" fill="none" stroke="#ffffff"/><text x="188.5" y="497.5" font-size="7.2" fill="#ffffff" text-anchor="start" font-style="italic" textLength="28" lengthAdjust="spacingAndGlyphs">60~1000</text><polyline points="380.5,482.5 380.5,491.5 624.5,491.5" fill="none" stroke="#ffffff"/><polyline points="310.5,436.5 310.5,506.5 667.5,506.5" fill="none" stroke="#ffffff"/><polyline points="667.5,453.5 667.5,506.5" fill="none" stroke="#ffffff"/><polyline points="292.5,454.5 292.5,522.5 658.5,522.5" fill="none" stroke="#ffffff"/><polyline points="658.5,455.5 658.5,522.5" fill="none" stroke="#ffffff"/><text x="496.5" y="491" font-size="8.4" fill="#ffffff" text-anchor="start" font-style="italic" textLength="11" lengthAdjust="spacingAndGlyphs">790</text><text x="483.5" y="506" font-size="8.4" fill="#ffffff" text-anchor="start" font-style="italic" textLength="11" lengthAdjust="spacingAndGlyphs">975</text><text x="469.5" y="521.8" font-size="8.4" fill="#ffffff" text-anchor="start" font-style="italic" textLength="11" lengthAdjust="spacingAndGlyphs">925</text><polyline points="277.5,401.5 277.5,427.5" fill="none" stroke="#ffffff"/><polyline points="333.5,375.5 333.5,453.5" fill="none" stroke="#ffffff"/><polyline points="322.5,375.5 333.5,375.5" fill="none" stroke="#ffffff"/><polyline points="322.5,453.5 333.5,453.5" fill="none" stroke="#ffffff"/><polyline points="649.5,372.5 649.5,455.5" fill="none" stroke="#ffffff"/><polyline points="664.5,401.5 664.5,427.5" fill="none" stroke="#ffffff"/><text transform="translate(276,423.5) rotate(-90)" font-size="7.5" fill="#ffffff" font-style="italic" textLength="18" lengthAdjust="spacingAndGlyphs">&#934;230f7</text><text transform="translate(332,423.5) rotate(-90)" font-size="7.5" fill="#ffffff" font-style="italic" textLength="18" lengthAdjust="spacingAndGlyphs">&#934;320f7</text><text transform="translate(649,425.5) rotate(-90)" font-size="7.5" fill="#ffffff" font-style="italic" textLength="21" lengthAdjust="spacingAndGlyphs">&#934;200H9</text><text transform="translate(664,423) rotate(-90)" font-size="7.5" fill="#ffffff" font-style="italic" textLength="17" lengthAdjust="spacingAndGlyphs">&#934;45f7</text><polyline points="416.5,352.5 416.5,393.5" fill="none" stroke="#ffffff"/><polyline points="416.5,427.5 416.5,474.5" fill="none" stroke="#ffffff"/><line x1="416.5" y1="393.5" x2="416.5" y2="427.5" stroke="#ffffff" stroke-dasharray="3 2" stroke-dashoffset="0"/><polyline points="418.5,352.5 418.5,393.5" fill="none" stroke="#ffffff"/><polyline points="418.5,427.5 418.5,474.5" fill="none" stroke="#ffffff"/><line x1="418.5" y1="393.5" x2="418.5" y2="427.5" stroke="#ffffff" stroke-dasharray="3 2" stroke-dashoffset="0"/><polyline points="617.5,338.5 624.5,338.5 624.5,341.5" fill="none" stroke="#ffffff"/><text x="626" y="343" font-size="7" fill="#ffffff" text-anchor="start" font-style="italic">A</text><polyline points="624.5,486.5 624.5,495.5 617.5,495.5" fill="none" stroke="#ffffff"/><text x="626" y="497" font-size="7" fill="#ffffff" text-anchor="start" font-style="italic">A</text><line x1="624.5" y1="341.5" x2="624.5" y2="370.5" stroke="#ff0000"/><line x1="624.5" y1="466.5" x2="624.5" y2="485.5" stroke="#ff0000"/><circle cx="236.5" cy="373.5" r="2.4" fill="#ffffff" stroke="none"/><circle cx="267.5" cy="373.5" r="2.4" fill="#ffffff" stroke="none"/><circle cx="284.5" cy="370.5" r="2.4" fill="#ffffff" stroke="none"/><circle cx="284.5" cy="370.5" r="0.9" fill="#000" stroke="none"/><circle cx="242.5" cy="393.5" r="2.4" fill="#ffffff" stroke="none"/><circle cx="255.5" cy="393.5" r="2.4" fill="#ffffff" stroke="none"/><circle cx="236.5" cy="399.5" r="2.4" fill="#ffffff" stroke="none"/><circle cx="236.5" cy="399.5" r="0.9" fill="#000" stroke="none"/><circle cx="246.5" cy="399.5" r="2.4" fill="#ffffff" stroke="none"/><circle cx="236.5" cy="429.5" r="2.4" fill="#ffffff" stroke="none"/><circle cx="236.5" cy="429.5" r="0.9" fill="#000" stroke="none"/><circle cx="246.5" cy="429.5" r="2.4" fill="#ffffff" stroke="none"/><circle cx="242.5" cy="435.5" r="2.4" fill="#ffffff" stroke="none"/><circle cx="255.5" cy="434.5" r="2.4" fill="#ffffff" stroke="none"/><circle cx="237.5" cy="455.5" r="2.4" fill="#ffffff" stroke="none"/><circle cx="268.5" cy="456.5" r="2.4" fill="#ffffff" stroke="none"/><circle cx="284.5" cy="460.5" r="2.4" fill="#ffffff" stroke="none"/><circle cx="284.5" cy="460.5" r="0.9" fill="#000" stroke="none"/><circle cx="675.5" cy="375.5" r="2.4" fill="#ffffff" stroke="none"/><circle cx="689.5" cy="375.5" r="2.4" fill="#ffffff" stroke="none"/><circle cx="719.5" cy="375.5" r="2.4" fill="#ffffff" stroke="none"/><circle cx="719.5" cy="375.5" r="0.9" fill="#000" stroke="none"/><circle cx="675.5" cy="394.5" r="2.4" fill="#ffffff" stroke="none"/><circle cx="687.5" cy="394.5" r="2.4" fill="#ffffff" stroke="none"/><circle cx="675.5" cy="434.5" r="2.4" fill="#ffffff" stroke="none"/><circle cx="691.5" cy="434.5" r="2.4" fill="#ffffff" stroke="none"/><circle cx="691.5" cy="434.5" r="0.9" fill="#000" stroke="none"/><circle cx="675.5" cy="454.5" r="2.4" fill="#ffffff" stroke="none"/><circle cx="689.5" cy="454.5" r="2.4" fill="#ffffff" stroke="none"/><circle cx="689.5" cy="454.5" r="0.9" fill="#000" stroke="none"/><circle cx="719.5" cy="454.5" r="2.4" fill="#ffffff" stroke="none"/><circle cx="719.5" cy="454.5" r="0.9" fill="#000" stroke="none"/><polyline points="219.5,535.5 197.5,425.5" fill="none" stroke="#ffffff"/><polyline points="219.5,535.5 230.5,535.5" fill="none" stroke="#ffffff"/><text x="220.5" y="534.5" font-size="7.6" fill="#ffffff" text-anchor="start" font-style="italic" textLength="5" lengthAdjust="spacingAndGlyphs">1</text><polyline points="241.5,535.5 231.5,462.5" fill="none" stroke="#ffffff"/><polyline points="241.5,535.5 252.5,535.5" fill="none" stroke="#ffffff"/><text x="242.5" y="534.5" font-size="7.6" fill="#ffffff" text-anchor="start" font-style="italic" textLength="5" lengthAdjust="spacingAndGlyphs">2</text><polyline points="258.5,535.5 238.5,455.5" fill="none" stroke="#ffffff"/><polyline points="258.5,535.5 269.5,535.5" fill="none" stroke="#ffffff"/><text x="259.5" y="534.5" font-size="7.6" fill="#ffffff" text-anchor="start" font-style="italic" textLength="5" lengthAdjust="spacingAndGlyphs">3</text><polyline points="275.5,535.5 240.5,431.5" fill="none" stroke="#ffffff"/><polyline points="275.5,535.5 286.5,535.5" fill="none" stroke="#ffffff"/><text x="276.5" y="534.5" font-size="7.6" fill="#ffffff" text-anchor="start" font-style="italic" textLength="5" lengthAdjust="spacingAndGlyphs">4</text><polyline points="301.5,535.5 246.5,430.5" fill="none" stroke="#ffffff"/><polyline points="301.5,535.5 312.5,535.5" fill="none" stroke="#ffffff"/><text x="302.5" y="534.5" font-size="7.6" fill="#ffffff" text-anchor="start" font-style="italic" textLength="5" lengthAdjust="spacingAndGlyphs">5</text><polyline points="317.5,535.5 268.5,456.5" fill="none" stroke="#ffffff"/><polyline points="317.5,535.5 328.5,535.5" fill="none" stroke="#ffffff"/><text x="318.5" y="534.5" font-size="7.6" fill="#ffffff" text-anchor="start" font-style="italic" textLength="5" lengthAdjust="spacingAndGlyphs">6</text><polyline points="337.5,535.5 284.5,460.5" fill="none" stroke="#ffffff"/><polyline points="337.5,535.5 348.5,535.5" fill="none" stroke="#ffffff"/><text x="338.5" y="534.5" font-size="7.6" fill="#ffffff" text-anchor="start" font-style="italic" textLength="5" lengthAdjust="spacingAndGlyphs">7</text><polyline points="364.5,535.5 330.5,467.5" fill="none" stroke="#ffffff"/><polyline points="364.5,535.5 375.5,535.5" fill="none" stroke="#ffffff"/><text x="365.5" y="534.5" font-size="7.6" fill="#ffffff" text-anchor="start" font-style="italic" textLength="5" lengthAdjust="spacingAndGlyphs">8</text><polyline points="384.5,535.5 340.5,392.5" fill="none" stroke="#ffffff"/><polyline points="384.5,535.5 395.5,535.5" fill="none" stroke="#ffffff"/><text x="385.5" y="534.5" font-size="7.6" fill="#ffffff" text-anchor="start" font-style="italic" textLength="5" lengthAdjust="spacingAndGlyphs">9</text><polyline points="398.5,535.5 381.5,477.5" fill="none" stroke="#ffffff"/><polyline points="398.5,535.5 409.5,535.5" fill="none" stroke="#ffffff"/><text x="399.5" y="534.5" font-size="7.6" fill="#ffffff" text-anchor="start" font-style="italic" textLength="7" lengthAdjust="spacingAndGlyphs">10</text><polyline points="416.5,535.5 382.5,475.5" fill="none" stroke="#ffffff"/><polyline points="416.5,535.5 427.5,535.5" fill="none" stroke="#ffffff"/><text x="417.5" y="534.5" font-size="7.6" fill="#ffffff" text-anchor="start" font-style="italic" textLength="7" lengthAdjust="spacingAndGlyphs">11</text><polyline points="435.5,535.5 392.5,469.5" fill="none" stroke="#ffffff"/><polyline points="435.5,535.5 446.5,535.5" fill="none" stroke="#ffffff"/><text x="436.5" y="534.5" font-size="7.6" fill="#ffffff" text-anchor="start" font-style="italic" textLength="7" lengthAdjust="spacingAndGlyphs">12</text><polyline points="646.5,535.5 667.5,456.5" fill="none" stroke="#ffffff"/><polyline points="637.5,535.5 646.5,535.5" fill="none" stroke="#ffffff"/><text x="638.5" y="534.5" font-size="7.6" fill="#ffffff" text-anchor="start" font-style="italic" textLength="7" lengthAdjust="spacingAndGlyphs">13</text><polyline points="657.5,535.5 672.5,454.5" fill="none" stroke="#ffffff"/><polyline points="648.5,535.5 657.5,535.5" fill="none" stroke="#ffffff"/><text x="649.5" y="534.5" font-size="7.6" fill="#ffffff" text-anchor="start" font-style="italic" textLength="7" lengthAdjust="spacingAndGlyphs">24</text><polyline points="668.5,535.5 680.5,455.5" fill="none" stroke="#ffffff"/><polyline points="659.5,535.5 668.5,535.5" fill="none" stroke="#ffffff"/><text x="660.5" y="534.5" font-size="7.6" fill="#ffffff" text-anchor="start" font-style="italic" textLength="7" lengthAdjust="spacingAndGlyphs">25</text><polyline points="678.5,535.5 689.5,453.5" fill="none" stroke="#ffffff"/><polyline points="669.5,535.5 678.5,535.5" fill="none" stroke="#ffffff"/><text x="670.5" y="534.5" font-size="7.6" fill="#ffffff" text-anchor="start" font-style="italic" textLength="7" lengthAdjust="spacingAndGlyphs">26</text><polyline points="689.5,535.5 700.5,447.5" fill="none" stroke="#ffffff"/><polyline points="680.5,535.5 689.5,535.5" fill="none" stroke="#ffffff"/><text x="681.5" y="534.5" font-size="7.6" fill="#ffffff" text-anchor="start" font-style="italic" textLength="7" lengthAdjust="spacingAndGlyphs">17</text><polyline points="699.5,535.5 710.5,471.5" fill="none" stroke="#ffffff"/><polyline points="690.5,535.5 699.5,535.5" fill="none" stroke="#ffffff"/><text x="691.5" y="534.5" font-size="7.6" fill="#ffffff" text-anchor="start" font-style="italic" textLength="7" lengthAdjust="spacingAndGlyphs">18</text><polyline points="726.5,535.5 706.5,447.5" fill="none" stroke="#ffffff"/><polyline points="726.5,535.5 735.5,535.5" fill="none" stroke="#ffffff"/><text x="727.5" y="534.5" font-size="7.6" fill="#ffffff" text-anchor="start" font-style="italic" textLength="7" lengthAdjust="spacingAndGlyphs">19</text><polyline points="740.5,535.5 716.5,440.5" fill="none" stroke="#ffffff"/><polyline points="740.5,535.5 749.5,535.5" fill="none" stroke="#ffffff"/><text x="741.5" y="534.5" font-size="7.6" fill="#ffffff" text-anchor="start" font-style="italic" textLength="7" lengthAdjust="spacingAndGlyphs">21</text><polyline points="762.5,535.5 731.5,456.5" fill="none" stroke="#ffffff"/><polyline points="762.5,535.5 771.5,535.5" fill="none" stroke="#ffffff"/><text x="763.5" y="534.5" font-size="7.6" fill="#ffffff" text-anchor="start" font-style="italic" textLength="7" lengthAdjust="spacingAndGlyphs">20</text><polyline points="777.5,535.5 746.5,457.5" fill="none" stroke="#ffffff"/><polyline points="777.5,535.5 786.5,535.5" fill="none" stroke="#ffffff"/><text x="778.5" y="534.5" font-size="7.6" fill="#ffffff" text-anchor="start" font-style="italic" textLength="7" lengthAdjust="spacingAndGlyphs">22</text><line x1="699.5" y1="373.5" x2="699.5" y2="453.5" stroke="#ffffff" stroke-dasharray="1 1" stroke-dashoffset="0"/><line x1="702.5" y1="373.5" x2="702.5" y2="453.5" stroke="#ffffff" stroke-dasharray="1 1" stroke-dashoffset="1"/><path clip-path="url(#h18)" d="M692.5,406.5L697.5,401.5M696.5,406.5L701.5,401.5M699.5,406.5L704.5,401.5M702.5,406.5L707.5,401.5M706.5,406.5L711.5,401.5M710.5,406.5L715.5,401.5M713.5,406.5L718.5,401.5M716.5,406.5L721.5,401.5M720.5,406.5L725.5,401.5" stroke="#ffffff" stroke-width="1" fill="none"/><path clip-path="url(#h19)" d="M691.5,428.5L697.5,422.5M694.5,428.5L700.5,422.5M698.5,428.5L704.5,422.5M702.5,428.5L708.5,422.5M705.5,428.5L711.5,422.5M708.5,428.5L714.5,422.5M712.5,428.5L718.5,422.5M716.5,428.5L722.5,422.5M719.5,428.5L725.5,422.5" stroke="#ffffff" stroke-width="1" fill="none"/><g mask="url(#h21)"><path clip-path="url(#h20)" d="M410.5,550.5L560.5,700.5M418.5,550.5L568.5,700.5M426.5,550.5L576.5,700.5M433.5,550.5L583.5,700.5M441.5,550.5L591.5,700.5M449.5,550.5L599.5,700.5M457.5,550.5L607.5,700.5M465.5,550.5L615.5,700.5M472.5,550.5L622.5,700.5M480.5,550.5L630.5,700.5M488.5,550.5L638.5,700.5M496.5,550.5L646.5,700.5M504.5,550.5L654.5,700.5M511.5,550.5L661.5,700.5M519.5,550.5L669.5,700.5M527.5,550.5L677.5,700.5M535.5,550.5L685.5,700.5M543.5,550.5L693.5,700.5M550.5,550.5L700.5,700.5M558.5,550.5L708.5,700.5M566.5,550.5L716.5,700.5M574.5,550.5L724.5,700.5M582.5,550.5L732.5,700.5M589.5,550.5L739.5,700.5M597.5,550.5L747.5,700.5M605.5,550.5L755.5,700.5M613.5,550.5L763.5,700.5M621.5,550.5L771.5,700.5M628.5,550.5L778.5,700.5M636.5,550.5L786.5,700.5M644.5,550.5L794.5,700.5M652.5,550.5L802.5,700.5M660.5,550.5L810.5,700.5M667.5,550.5L817.5,700.5M675.5,550.5L825.5,700.5M683.5,550.5L833.5,700.5M691.5,550.5L841.5,700.5M699.5,550.5L849.5,700.5M706.5,550.5L856.5,700.5" stroke="#ffffff" stroke-width="1" fill="none"/></g><path mask="url(#h22)" d="M490.5,670.5L580.5,580.5M497.5,670.5L587.5,580.5M503.5,670.5L593.5,580.5M510.5,670.5L600.5,580.5M516.5,670.5L606.5,580.5M523.5,670.5L613.5,580.5M530.5,670.5L620.5,580.5M536.5,670.5L626.5,580.5M543.5,670.5L633.5,580.5M549.5,670.5L639.5,580.5M556.5,670.5L646.5,580.5M563.5,670.5L653.5,580.5M569.5,670.5L659.5,580.5M576.5,670.5L666.5,580.5M582.5,670.5L672.5,580.5M589.5,670.5L679.5,580.5M596.5,670.5L686.5,580.5M602.5,670.5L692.5,580.5M609.5,670.5L699.5,580.5M615.5,670.5L705.5,580.5M622.5,670.5L712.5,580.5M629.5,670.5L719.5,580.5M635.5,670.5L725.5,580.5M642.5,670.5L732.5,580.5M648.5,670.5L738.5,580.5M655.5,670.5L745.5,580.5M662.5,670.5L752.5,580.5M668.5,670.5L758.5,580.5M675.5,670.5L765.5,580.5" stroke="#ffffff" stroke-width="1" fill="none"/><path clip-path="url(#h23)" d="M580.5,610.5L610.5,640.5M586.5,610.5L616.5,640.5M593.5,610.5L623.5,640.5M600.5,610.5L630.5,640.5M606.5,610.5L636.5,640.5M612.5,610.5L642.5,640.5M619.5,610.5L649.5,640.5M626.5,610.5L656.5,640.5M632.5,610.5L662.5,640.5M638.5,610.5L668.5,640.5M645.5,610.5L675.5,640.5" stroke="#ffffff" stroke-width="1" fill="none"/><circle cx="624.5" cy="624.5" r="42.2" fill="none" stroke="#00ff00"/><circle cx="624.5" cy="624.5" r="40.4" fill="none" stroke="#00ff00"/><circle cx="624.5" cy="624.5" r="38.7" fill="none" stroke="#00ff00"/><circle cx="624.5" cy="624.5" r="21.5" fill="none" stroke="#00ff00"/><circle cx="624.5" cy="624.5" r="19.5" fill="none" stroke="#00ff00"/><circle cx="624.5" cy="624.5" r="17" fill="none" stroke="#00ff00"/><circle cx="624.5" cy="624.5" r="12.5" fill="none" stroke="#00ff00"/><circle cx="624.5" cy="595.5" r="6" fill="none" stroke="#00ff00"/><line x1="613.5" y1="595.5" x2="635.5" y2="595.5" stroke="#ff0000"/><line x1="624.5" y1="589.5" x2="624.5" y2="602.5" stroke="#ff0000"/><path d="M643.5,572.5 A54,54 0 1,0 656,668" fill="none" stroke="#00ff00"/><path d="M606.5,560.5 C596,563 588,567 580.5,574 A67,67 0 1,0 672.5,671 C676,668 678.5,665.5 680.5,663.5 C678,661 672,660.5 668,662 C663,663.5 659,666 656,668" fill="none" stroke="#00ff00"/><path d="M641.5,560.5 A67,67 0 0,1 677.5,582.5 C680,585.5 679,588 675,588.5 C669,589 661,585 650,576 C647,574 645,573 643.5,572.5" fill="none" stroke="#00ff00"/><rect x="606.5" y="555.5" width="35" height="17" fill="none" stroke="#00ff00"/><line x1="624.5" y1="553.5" x2="624.5" y2="697.5" stroke="#ff0000" stroke-dasharray="28 4.5 5.5 4.9" stroke-dashoffset="0"/><line x1="552.5" y1="624.5" x2="701.5" y2="624.5" stroke="#ff0000" stroke-dasharray="28 4.5 5.5 4.9" stroke-dashoffset="2"/><text x="618" y="552" font-size="7.5" fill="#ffffff" text-anchor="start" font-style="italic" textLength="13" lengthAdjust="spacingAndGlyphs">A-A</text><rect x="670" y="556" width="46" height="21" fill="#000" stroke="none"/><path clip-path="url(#h24)" d="M661.5,556.5L681.5,576.5M667.5,556.5L687.5,576.5M673.5,556.5L693.5,576.5M679.5,556.5L699.5,576.5M685.5,556.5L705.5,576.5M691.5,556.5L711.5,576.5M697.5,556.5L717.5,576.5" stroke="#ffffff" stroke-width="1" fill="none"/><rect x="689" y="560" width="27" height="12" fill="#000" stroke="none"/><polygon points="673.5,557.5 679.5,557.5 681.5,560.5 681.5,572.5 679.5,575.5 673.5,575.5 671.5,572.5 671.5,560.5" fill="none" stroke="#00ff00"/><line x1="671.5" y1="563.5" x2="681.5" y2="563.5" stroke="#00ff00"/><line x1="671.5" y1="569.5" x2="681.5" y2="569.5" stroke="#00ff00"/><rect x="681.5" y="555.5" width="2" height="22" fill="none" stroke="#00ff00"/><polyline points="689.5,560.5 714.5,560.5 716.5,562.5 716.5,570.5 714.5,572.5 689.5,572.5" fill="none" stroke="#00ff00"/><line x1="690.5" y1="561.5" x2="713.5" y2="561.5" stroke="#ffff00"/><line x1="690.5" y1="571.5" x2="713.5" y2="571.5" stroke="#ffff00"/><line x1="713.5" y1="561.5" x2="713.5" y2="571.5" stroke="#00ff00"/><line x1="667.5" y1="566.5" x2="720.5" y2="566.5" stroke="#ff0000" stroke-dasharray="28 4.5 5.5 4.9" stroke-dashoffset="0"/><rect x="670" y="672" width="46" height="21" fill="#000" stroke="none"/><path clip-path="url(#h25)" d="M661.5,672.5L681.5,692.5M667.5,672.5L687.5,692.5M673.5,672.5L693.5,692.5M679.5,672.5L699.5,692.5M685.5,672.5L705.5,692.5M691.5,672.5L711.5,692.5M697.5,672.5L717.5,692.5" stroke="#ffffff" stroke-width="1" fill="none"/><rect x="689" y="676" width="27" height="12" fill="#000" stroke="none"/><polygon points="673.5,673.5 679.5,673.5 681.5,676.5 681.5,688.5 679.5,691.5 673.5,691.5 671.5,688.5 671.5,676.5" fill="none" stroke="#00ff00"/><line x1="671.5" y1="679.5" x2="681.5" y2="679.5" stroke="#00ff00"/><line x1="671.5" y1="685.5" x2="681.5" y2="685.5" stroke="#00ff00"/><rect x="681.5" y="671.5" width="2" height="22" fill="none" stroke="#00ff00"/><polyline points="689.5,676.5 714.5,676.5 716.5,678.5 716.5,686.5 714.5,688.5 689.5,688.5" fill="none" stroke="#00ff00"/><line x1="690.5" y1="677.5" x2="713.5" y2="677.5" stroke="#ffff00"/><line x1="690.5" y1="687.5" x2="713.5" y2="687.5" stroke="#ffff00"/><line x1="713.5" y1="677.5" x2="713.5" y2="687.5" stroke="#00ff00"/><line x1="667.5" y1="682.5" x2="720.5" y2="682.5" stroke="#ff0000" stroke-dasharray="28 4.5 5.5 4.9" stroke-dashoffset="0"/><polyline points="681.5,556.5 696.5,556.5 696.5,692.5 681.5,692.5" fill="none" stroke="#00ff00"/><polyline points="548.5,636.5 555.5,636.5 600.5,630.5 624.5,625.5" fill="none" stroke="#ffffff"/><text x="547" y="637" font-size="6.5" fill="#ffffff" text-anchor="start" font-style="italic">1</text><line x1="865.5" y1="491.5" x2="1018.5" y2="491.5" stroke="#ffffff"/><line x1="865.5" y1="500.5" x2="1018.5" y2="500.5" stroke="#ffffff"/><line x1="865.5" y1="508.5" x2="1018.5" y2="508.5" stroke="#ffffff"/><line x1="865.5" y1="517.5" x2="1018.5" y2="517.5" stroke="#ffffff"/><line x1="865.5" y1="525.5" x2="1018.5" y2="525.5" stroke="#ffffff"/><line x1="865.5" y1="534.5" x2="1018.5" y2="534.5" stroke="#ffffff"/><line x1="865.5" y1="542.5" x2="1018.5" y2="542.5" stroke="#ffffff"/><line x1="865.5" y1="551.5" x2="1018.5" y2="551.5" stroke="#ffffff"/><line x1="865.5" y1="559.5" x2="1018.5" y2="559.5" stroke="#ffffff"/><line x1="865.5" y1="568.5" x2="1018.5" y2="568.5" stroke="#ffffff"/><line x1="865.5" y1="576.5" x2="1018.5" y2="576.5" stroke="#ffffff"/><line x1="865.5" y1="585.5" x2="1018.5" y2="585.5" stroke="#ffffff"/><line x1="865.5" y1="593.5" x2="1018.5" y2="593.5" stroke="#ffffff"/><line x1="865.5" y1="602.5" x2="1018.5" y2="602.5" stroke="#ffffff"/><line x1="865.5" y1="610.5" x2="1018.5" y2="610.5" stroke="#ffffff"/><line x1="865.5" y1="619.5" x2="1018.5" y2="619.5" stroke="#ffffff"/><line x1="865.5" y1="627.5" x2="1018.5" y2="627.5" stroke="#ffffff"/><line x1="865.5" y1="636.5" x2="1018.5" y2="636.5" stroke="#ffffff"/><line x1="865.5" y1="644.5" x2="1018.5" y2="644.5" stroke="#ffffff"/><line x1="865.5" y1="653.5" x2="1018.5" y2="653.5" stroke="#ffffff"/><line x1="865.5" y1="661.5" x2="1018.5" y2="661.5" stroke="#ffffff"/><line x1="865.5" y1="670.5" x2="1018.5" y2="670.5" stroke="#ffffff"/><line x1="865.5" y1="678.5" x2="1018.5" y2="678.5" stroke="#ffffff"/><line x1="865.5" y1="687.5" x2="1018.5" y2="687.5" stroke="#ffffff"/><line x1="865.5" y1="687.5" x2="1018.5" y2="687.5" stroke="#ffffff"/><line x1="865.5" y1="491.5" x2="865.5" y2="687.5" stroke="#ffffff"/><line x1="878.5" y1="491.5" x2="878.5" y2="687.5" stroke="#ffffff"/><line x1="922.5" y1="491.5" x2="922.5" y2="687.5" stroke="#ffffff"/><line x1="934.5" y1="491.5" x2="934.5" y2="687.5" stroke="#ffffff"/><line x1="968.5" y1="491.5" x2="968.5" y2="687.5" stroke="#ffffff"/><line x1="1018.5" y1="491.5" x2="1018.5" y2="687.5" stroke="#ffffff"/><line x1="865.5" y1="687.5" x2="865.5" y2="726.5" stroke="#ffffff"/><line x1="922.5" y1="687.5" x2="922.5" y2="726.5" stroke="#ffffff"/><line x1="966.5" y1="687.5" x2="966.5" y2="726.5" stroke="#ffffff"/><line x1="922.5" y1="713.5" x2="966.5" y2="713.5" stroke="#ffffff"/><line x1="865.5" y1="691.5" x2="922.5" y2="691.5" stroke="#ffffff"/><line x1="865.5" y1="696.5" x2="922.5" y2="696.5" stroke="#ffffff"/><line x1="865.5" y1="700.5" x2="922.5" y2="700.5" stroke="#ffffff"/><line x1="865.5" y1="705.5" x2="922.5" y2="705.5" stroke="#ffffff"/><line x1="865.5" y1="710.5" x2="922.5" y2="710.5" stroke="#ffffff"/><line x1="865.5" y1="715.5" x2="922.5" y2="715.5" stroke="#ffffff"/><line x1="865.5" y1="720.5" x2="922.5" y2="720.5" stroke="#ffffff"/><line x1="872.5" y1="686.5" x2="872.5" y2="705.5" stroke="#ffffff"/><line x1="879.5" y1="686.5" x2="879.5" y2="705.5" stroke="#ffffff"/><line x1="895.5" y1="686.5" x2="895.5" y2="705.5" stroke="#ffffff"/><line x1="910.5" y1="686.5" x2="910.5" y2="705.5" stroke="#ffffff"/><line x1="879.5" y1="705.5" x2="879.5" y2="726.5" stroke="#ffffff"/><line x1="893.5" y1="705.5" x2="893.5" y2="726.5" stroke="#ffffff"/><line x1="907.5" y1="705.5" x2="907.5" y2="726.5" stroke="#ffffff"/><line x1="966.5" y1="698.5" x2="1018.5" y2="698.5" stroke="#ffffff"/><line x1="966.5" y1="703.5" x2="1018.5" y2="703.5" stroke="#ffffff"/><line x1="966.5" y1="710.5" x2="1018.5" y2="710.5" stroke="#ffffff"/><line x1="966.5" y1="715.5" x2="1018.5" y2="715.5" stroke="#ffffff"/><line x1="979.5" y1="703.5" x2="979.5" y2="710.5" stroke="#ffffff"/><line x1="992.5" y1="703.5" x2="992.5" y2="710.5" stroke="#ffffff"/><line x1="1005.5" y1="703.5" x2="1005.5" y2="710.5" stroke="#ffffff"/><text x="868" y="498.9" font-size="8.2" fill="#ffffff" text-anchor="start" font-style="italic" textLength="8" lengthAdjust="spacingAndGlyphs">22</text><rect x="893.75" y="492.5" width="6" height="1.2" fill="#ffffff"/><rect x="894.25" y="495.4" width="5" height="1.2" fill="#ffffff"/><rect x="896.15" y="492.5" width="1.2" height="7" fill="#ffffff"/><rect x="898.55" y="496" width="1.2" height="3.5" fill="#ffffff"/><rect x="893.75" y="498.3" width="6" height="1.2" fill="#ffffff"/><rect x="901.25" y="492.5" width="6" height="1.2" fill="#ffffff"/><rect x="901.75" y="495.4" width="5" height="1.2" fill="#ffffff"/><rect x="903.65" y="492.5" width="1.2" height="7" fill="#ffffff"/><rect x="901.25" y="493.5" width="1.2" height="6" fill="#ffffff"/><rect x="901.25" y="498.3" width="6" height="1.2" fill="#ffffff"/><text x="927" y="498.9" font-size="8.2" fill="#ffffff" text-anchor="start" font-style="italic" textLength="4" lengthAdjust="spacingAndGlyphs">1</text><text x="944" y="498.9" font-size="8.2" fill="#ffffff" text-anchor="start" font-style="italic" textLength="8" lengthAdjust="spacingAndGlyphs">45</text><rect x="953" y="492.5" width="6" height="1.2" fill="#ffffff"/><rect x="953.5" y="495.4" width="5" height="1.2" fill="#ffffff"/><rect x="955.4" y="492.5" width="1.2" height="7" fill="#ffffff"/><rect x="953" y="493.5" width="1.2" height="6" fill="#ffffff"/><rect x="957.8" y="496" width="1.2" height="3.5" fill="#ffffff"/><rect x="953" y="498.3" width="6" height="1.2" fill="#ffffff"/><text x="868" y="507.9" font-size="8.2" fill="#ffffff" text-anchor="start" font-style="italic" textLength="8" lengthAdjust="spacingAndGlyphs">21</text><rect x="893.75" y="501.5" width="6" height="1.2" fill="#ffffff"/><rect x="894.25" y="504.4" width="5" height="1.2" fill="#ffffff"/><rect x="896.15" y="501.5" width="1.2" height="7" fill="#ffffff"/><rect x="893.75" y="507.3" width="6" height="1.2" fill="#ffffff"/><rect x="901.25" y="501.5" width="6" height="1.2" fill="#ffffff"/><rect x="901.75" y="504.4" width="5" height="1.2" fill="#ffffff"/><rect x="903.65" y="501.5" width="1.2" height="7" fill="#ffffff"/><rect x="901.25" y="507.3" width="6" height="1.2" fill="#ffffff"/><text x="927" y="507.9" font-size="8.2" fill="#ffffff" text-anchor="start" font-style="italic" textLength="4" lengthAdjust="spacingAndGlyphs">1</text><text x="937.8" y="507.9" font-size="8.2" fill="#ffffff" text-anchor="start" font-style="italic" textLength="26.400000000000002" lengthAdjust="spacingAndGlyphs">Q235-A</text><text x="972.8" y="507.9" font-size="8.2" fill="#ffffff" text-anchor="start" font-style="italic" textLength="41.4" lengthAdjust="spacingAndGlyphs">GB6170-86</text><text x="868" y="515.9" font-size="8.2" fill="#ffffff" text-anchor="start" font-style="italic" textLength="8" lengthAdjust="spacingAndGlyphs">20</text><rect x="886.25" y="509.5" width="6" height="1.2" fill="#ffffff"/><rect x="886.75" y="512.4" width="5" height="1.2" fill="#ffffff"/><rect x="888.65" y="509.5" width="1.2" height="7" fill="#ffffff"/><rect x="886.25" y="515.3" width="6" height="1.2" fill="#ffffff"/><rect x="893.75" y="509.5" width="6" height="1.2" fill="#ffffff"/><rect x="894.25" y="512.4" width="5" height="1.2" fill="#ffffff"/><rect x="896.15" y="509.5" width="1.2" height="7" fill="#ffffff"/><rect x="898.55" y="513" width="1.2" height="3.5" fill="#ffffff"/><rect x="893.75" y="515.3" width="6" height="1.2" fill="#ffffff"/><rect x="901.25" y="509.5" width="6" height="1.2" fill="#ffffff"/><rect x="901.75" y="512.4" width="5" height="1.2" fill="#ffffff"/><rect x="903.65" y="509.5" width="1.2" height="7" fill="#ffffff"/><rect x="901.25" y="515.3" width="6" height="1.2" fill="#ffffff"/><rect x="908.75" y="509.5" width="6" height="1.2" fill="#ffffff"/><rect x="909.25" y="512.4" width="5" height="1.2" fill="#ffffff"/><rect x="911.15" y="509.5" width="1.2" height="7" fill="#ffffff"/><rect x="908.75" y="510.5" width="1.2" height="6" fill="#ffffff"/><rect x="908.75" y="515.3" width="6" height="1.2" fill="#ffffff"/><text x="927" y="515.9" font-size="8.2" fill="#ffffff" text-anchor="start" font-style="italic" textLength="4" lengthAdjust="spacingAndGlyphs">1</text><text x="942.2" y="515.9" font-size="8.2" fill="#ffffff" text-anchor="start" font-style="italic" textLength="17.6" lengthAdjust="spacingAndGlyphs">65Mn</text><text x="977.4" y="515.9" font-size="8.2" fill="#ffffff" text-anchor="start" font-style="italic" textLength="32.199999999999996" lengthAdjust="spacingAndGlyphs">GB93-87</text><text x="868" y="524.9" font-size="8.2" fill="#ffffff" text-anchor="start" font-style="italic" textLength="8" lengthAdjust="spacingAndGlyphs">19</text><rect x="893.75" y="518.5" width="6" height="1.2" fill="#ffffff"/><rect x="894.25" y="521.4" width="5" height="1.2" fill="#ffffff"/><rect x="896.15" y="518.5" width="1.2" height="7" fill="#ffffff"/><rect x="893.75" y="524.3" width="6" height="1.2" fill="#ffffff"/><rect x="901.25" y="518.5" width="6" height="1.2" fill="#ffffff"/><rect x="901.75" y="521.4" width="5" height="1.2" fill="#ffffff"/><rect x="903.65" y="518.5" width="1.2" height="7" fill="#ffffff"/><rect x="901.25" y="524.3" width="6" height="1.2" fill="#ffffff"/><text x="927" y="524.9" font-size="8.2" fill="#ffffff" text-anchor="start" font-style="italic" textLength="4" lengthAdjust="spacingAndGlyphs">1</text><text x="942.2" y="524.9" font-size="8.2" fill="#ffffff" text-anchor="start" font-style="italic" textLength="17.6" lengthAdjust="spacingAndGlyphs">Q235</text><text x="977.4" y="524.9" font-size="8.2" fill="#ffffff" text-anchor="start" font-style="italic" textLength="32.199999999999996" lengthAdjust="spacingAndGlyphs">GB6x-85</text><text x="868" y="532.9" font-size="8.2" fill="#ffffff" text-anchor="start" font-style="italic" textLength="8" lengthAdjust="spacingAndGlyphs">18</text><rect x="884" y="526.5" width="6" height="1.2" fill="#ffffff"/><rect x="884.5" y="529.4" width="5" height="1.2" fill="#ffffff"/><rect x="886.4" y="526.5" width="1.2" height="7" fill="#ffffff"/><rect x="884" y="527.5" width="1.2" height="6" fill="#ffffff"/><rect x="888.8" y="530" width="1.2" height="3.5" fill="#ffffff"/><rect x="884" y="532.3" width="6" height="1.2" fill="#ffffff"/><text x="892" y="532.9" font-size="8.2" fill="#ffffff" text-anchor="start" font-style="italic" textLength="19" lengthAdjust="spacingAndGlyphs">M10x28</text><text x="927" y="532.9" font-size="8.2" fill="#ffffff" text-anchor="start" font-style="italic" textLength="4" lengthAdjust="spacingAndGlyphs">2</text><text x="937.8" y="532.9" font-size="8.2" fill="#ffffff" text-anchor="start" font-style="italic" textLength="26.400000000000002" lengthAdjust="spacingAndGlyphs">Q235-A</text><text x="977.4" y="532.9" font-size="8.2" fill="#ffffff" text-anchor="start" font-style="italic" textLength="32.199999999999996" lengthAdjust="spacingAndGlyphs">GB70-85</text><text x="868" y="541.9" font-size="8.2" fill="#ffffff" text-anchor="start" font-style="italic" textLength="8" lengthAdjust="spacingAndGlyphs">17</text><rect x="893.75" y="535.5" width="6" height="1.2" fill="#ffffff"/><rect x="894.25" y="538.4" width="5" height="1.2" fill="#ffffff"/><rect x="896.15" y="535.5" width="1.2" height="7" fill="#ffffff"/><rect x="893.75" y="536.5" width="1.2" height="6" fill="#ffffff"/><rect x="898.55" y="539" width="1.2" height="3.5" fill="#ffffff"/><rect x="893.75" y="541.3" width="6" height="1.2" fill="#ffffff"/><rect x="901.25" y="535.5" width="6" height="1.2" fill="#ffffff"/><rect x="901.75" y="538.4" width="5" height="1.2" fill="#ffffff"/><rect x="903.65" y="535.5" width="1.2" height="7" fill="#ffffff"/><rect x="901.25" y="541.3" width="6" height="1.2" fill="#ffffff"/><text x="927" y="541.9" font-size="8.2" fill="#ffffff" text-anchor="start" font-style="italic" textLength="4" lengthAdjust="spacingAndGlyphs">1</text><text x="944" y="541.9" font-size="8.2" fill="#ffffff" text-anchor="start" font-style="italic" textLength="8" lengthAdjust="spacingAndGlyphs">45</text><rect x="953" y="535.5" width="6" height="1.2" fill="#ffffff"/><rect x="953.5" y="538.4" width="5" height="1.2" fill="#ffffff"/><rect x="955.4" y="535.5" width="1.2" height="7" fill="#ffffff"/><rect x="953" y="536.5" width="1.2" height="6" fill="#ffffff"/><rect x="953" y="541.3" width="6" height="1.2" fill="#ffffff"/><text x="868" y="549.9" font-size="8.2" fill="#ffffff" text-anchor="start" font-style="italic" textLength="8" lengthAdjust="spacingAndGlyphs">16</text><rect x="893.75" y="543.5" width="6" height="1.2" fill="#ffffff"/><rect x="894.25" y="546.4" width="5" height="1.2" fill="#ffffff"/><rect x="896.15" y="543.5" width="1.2" height="7" fill="#ffffff"/><rect x="893.75" y="549.3" width="6" height="1.2" fill="#ffffff"/><rect x="901.25" y="543.5" width="6" height="1.2" fill="#ffffff"/><rect x="901.75" y="546.4" width="5" height="1.2" fill="#ffffff"/><rect x="903.65" y="543.5" width="1.2" height="7" fill="#ffffff"/><rect x="901.25" y="544.5" width="1.2" height="6" fill="#ffffff"/><rect x="906.05" y="547" width="1.2" height="3.5" fill="#ffffff"/><rect x="901.25" y="549.3" width="6" height="1.2" fill="#ffffff"/><text x="927" y="549.9" font-size="8.2" fill="#ffffff" text-anchor="start" font-style="italic" textLength="4" lengthAdjust="spacingAndGlyphs">1</text><rect x="937" y="543.5" width="6" height="1.2" fill="#ffffff"/><rect x="937.5" y="546.4" width="5" height="1.2" fill="#ffffff"/><rect x="939.4" y="543.5" width="1.2" height="7" fill="#ffffff"/><rect x="937" y="549.3" width="6" height="1.2" fill="#ffffff"/><rect x="944.5" y="543.5" width="6" height="1.2" fill="#ffffff"/><rect x="945" y="546.4" width="5" height="1.2" fill="#ffffff"/><rect x="946.9" y="543.5" width="1.2" height="7" fill="#ffffff"/><rect x="944.5" y="549.3" width="6" height="1.2" fill="#ffffff"/><rect x="952" y="543.5" width="6" height="1.2" fill="#ffffff"/><rect x="952.5" y="546.4" width="5" height="1.2" fill="#ffffff"/><rect x="954.4" y="543.5" width="1.2" height="7" fill="#ffffff"/><rect x="952" y="544.5" width="1.2" height="6" fill="#ffffff"/><rect x="952" y="549.3" width="6" height="1.2" fill="#ffffff"/><rect x="959.5" y="543.5" width="6" height="1.2" fill="#ffffff"/><rect x="960" y="546.4" width="5" height="1.2" fill="#ffffff"/><rect x="961.9" y="543.5" width="1.2" height="7" fill="#ffffff"/><rect x="959.5" y="549.3" width="6" height="1.2" fill="#ffffff"/><text x="969.5" y="549.9" font-size="8.2" fill="#ffffff" text-anchor="start" font-style="italic" textLength="48" lengthAdjust="spacingAndGlyphs">GB12014596-86</text><text x="868" y="558.9" font-size="8.2" fill="#ffffff" text-anchor="start" font-style="italic" textLength="8" lengthAdjust="spacingAndGlyphs">15</text><rect x="884" y="552.5" width="6" height="1.2" fill="#ffffff"/><rect x="884.5" y="555.4" width="5" height="1.2" fill="#ffffff"/><rect x="886.4" y="552.5" width="1.2" height="7" fill="#ffffff"/><rect x="884" y="553.5" width="1.2" height="6" fill="#ffffff"/><rect x="888.8" y="556" width="1.2" height="3.5" fill="#ffffff"/><rect x="884" y="558.3" width="6" height="1.2" fill="#ffffff"/><text x="892" y="558.9" font-size="8.2" fill="#ffffff" text-anchor="start" font-style="italic" textLength="19" lengthAdjust="spacingAndGlyphs">M8x28</text><text x="927" y="558.9" font-size="8.2" fill="#ffffff" text-anchor="start" font-style="italic" textLength="4" lengthAdjust="spacingAndGlyphs">2</text><text x="937.8" y="558.9" font-size="8.2" fill="#ffffff" text-anchor="start" font-style="italic" textLength="26.400000000000002" lengthAdjust="spacingAndGlyphs">Q235-A</text><text x="977.4" y="558.9" font-size="8.2" fill="#ffffff" text-anchor="start" font-style="italic" textLength="32.199999999999996" lengthAdjust="spacingAndGlyphs">GB70-85</text><text x="868" y="566.9" font-size="8.2" fill="#ffffff" text-anchor="start" font-style="italic" textLength="8" lengthAdjust="spacingAndGlyphs">14</text><text x="884" y="566.9" font-size="8.2" fill="#ffffff" text-anchor="start" font-style="italic" textLength="5" lengthAdjust="spacingAndGlyphs">O</text><rect x="890" y="560.5" width="6" height="1.2" fill="#ffffff"/><rect x="890.5" y="563.4" width="5" height="1.2" fill="#ffffff"/><rect x="892.4" y="560.5" width="1.2" height="7" fill="#ffffff"/><rect x="890" y="566.3" width="6" height="1.2" fill="#ffffff"/><rect x="897.5" y="560.5" width="6" height="1.2" fill="#ffffff"/><rect x="898" y="563.4" width="5" height="1.2" fill="#ffffff"/><rect x="899.9" y="560.5" width="1.2" height="7" fill="#ffffff"/><rect x="897.5" y="561.5" width="1.2" height="6" fill="#ffffff"/><rect x="897.5" y="566.3" width="6" height="1.2" fill="#ffffff"/><rect x="905" y="560.5" width="6" height="1.2" fill="#ffffff"/><rect x="905.5" y="563.4" width="5" height="1.2" fill="#ffffff"/><rect x="907.4" y="560.5" width="1.2" height="7" fill="#ffffff"/><rect x="905" y="566.3" width="6" height="1.2" fill="#ffffff"/><text x="927" y="566.9" font-size="8.2" fill="#ffffff" text-anchor="start" font-style="italic" textLength="4" lengthAdjust="spacingAndGlyphs">3</text><rect x="937" y="560.5" width="6" height="1.2" fill="#ffffff"/><rect x="937.5" y="563.4" width="5" height="1.2" fill="#ffffff"/><rect x="939.4" y="560.5" width="1.2" height="7" fill="#ffffff"/><rect x="937" y="561.5" width="1.2" height="6" fill="#ffffff"/><rect x="937" y="566.3" width="6" height="1.2" fill="#ffffff"/><rect x="944.5" y="560.5" width="6" height="1.2" fill="#ffffff"/><rect x="945" y="563.4" width="5" height="1.2" fill="#ffffff"/><rect x="946.9" y="560.5" width="1.2" height="7" fill="#ffffff"/><rect x="949.3" y="564" width="1.2" height="3.5" fill="#ffffff"/><rect x="944.5" y="566.3" width="6" height="1.2" fill="#ffffff"/><rect x="952" y="560.5" width="6" height="1.2" fill="#ffffff"/><rect x="952.5" y="563.4" width="5" height="1.2" fill="#ffffff"/><rect x="954.4" y="560.5" width="1.2" height="7" fill="#ffffff"/><rect x="952" y="561.5" width="1.2" height="6" fill="#ffffff"/><rect x="956.8" y="564" width="1.2" height="3.5" fill="#ffffff"/><rect x="952" y="566.3" width="6" height="1.2" fill="#ffffff"/><rect x="959.5" y="560.5" width="6" height="1.2" fill="#ffffff"/><rect x="960" y="563.4" width="5" height="1.2" fill="#ffffff"/><rect x="961.9" y="560.5" width="1.2" height="7" fill="#ffffff"/><rect x="959.5" y="561.5" width="1.2" height="6" fill="#ffffff"/><rect x="959.5" y="566.3" width="6" height="1.2" fill="#ffffff"/><text x="969.5" y="566.9" font-size="8.2" fill="#ffffff" text-anchor="start" font-style="italic" textLength="48" lengthAdjust="spacingAndGlyphs">GB3452.1-92</text><text x="868" y="575.9" font-size="8.2" fill="#ffffff" text-anchor="start" font-style="italic" textLength="8" lengthAdjust="spacingAndGlyphs">13</text><rect x="893.75" y="569.5" width="6" height="1.2" fill="#ffffff"/><rect x="894.25" y="572.4" width="5" height="1.2" fill="#ffffff"/><rect x="896.15" y="569.5" width="1.2" height="7" fill="#ffffff"/><rect x="893.75" y="575.3" width="6" height="1.2" fill="#ffffff"/><rect x="901.25" y="569.5" width="6" height="1.2" fill="#ffffff"/><rect x="901.75" y="572.4" width="5" height="1.2" fill="#ffffff"/><rect x="903.65" y="569.5" width="1.2" height="7" fill="#ffffff"/><rect x="906.05" y="573" width="1.2" height="3.5" fill="#ffffff"/><rect x="901.25" y="575.3" width="6" height="1.2" fill="#ffffff"/><text x="927" y="575.9" font-size="8.2" fill="#ffffff" text-anchor="start" font-style="italic" textLength="4" lengthAdjust="spacingAndGlyphs">1</text><text x="940" y="575.9" font-size="8.2" fill="#ffffff" text-anchor="start" font-style="italic" textLength="22.0" lengthAdjust="spacingAndGlyphs">HT200</text><text x="868" y="583.9" font-size="8.2" fill="#ffffff" text-anchor="start" font-style="italic" textLength="8" lengthAdjust="spacingAndGlyphs">12</text><rect x="893.75" y="577.5" width="6" height="1.2" fill="#ffffff"/><rect x="894.25" y="580.4" width="5" height="1.2" fill="#ffffff"/><rect x="896.15" y="577.5" width="1.2" height="7" fill="#ffffff"/><rect x="893.75" y="578.5" width="1.2" height="6" fill="#ffffff"/><rect x="893.75" y="583.3" width="6" height="1.2" fill="#ffffff"/><rect x="901.25" y="577.5" width="6" height="1.2" fill="#ffffff"/><rect x="901.75" y="580.4" width="5" height="1.2" fill="#ffffff"/><rect x="903.65" y="577.5" width="1.2" height="7" fill="#ffffff"/><rect x="901.25" y="583.3" width="6" height="1.2" fill="#ffffff"/><text x="927" y="583.9" font-size="8.2" fill="#ffffff" text-anchor="start" font-style="italic" textLength="4" lengthAdjust="spacingAndGlyphs">4</text><text x="942.2" y="583.9" font-size="8.2" fill="#ffffff" text-anchor="start" font-style="italic" textLength="17.6" lengthAdjust="spacingAndGlyphs">Q235</text><text x="977.4" y="583.9" font-size="8.2" fill="#ffffff" text-anchor="start" font-style="italic" textLength="32.199999999999996" lengthAdjust="spacingAndGlyphs">GB6x-85</text><text x="868" y="592.9" font-size="8.2" fill="#ffffff" text-anchor="start" font-style="italic" textLength="8" lengthAdjust="spacingAndGlyphs">11</text><rect x="886.25" y="586.5" width="6" height="1.2" fill="#ffffff"/><rect x="886.75" y="589.4" width="5" height="1.2" fill="#ffffff"/><rect x="888.65" y="586.5" width="1.2" height="7" fill="#ffffff"/><rect x="886.25" y="587.5" width="1.2" height="6" fill="#ffffff"/><rect x="886.25" y="592.3" width="6" height="1.2" fill="#ffffff"/><rect x="893.75" y="586.5" width="6" height="1.2" fill="#ffffff"/><rect x="894.25" y="589.4" width="5" height="1.2" fill="#ffffff"/><rect x="896.15" y="586.5" width="1.2" height="7" fill="#ffffff"/><rect x="898.55" y="590" width="1.2" height="3.5" fill="#ffffff"/><rect x="893.75" y="592.3" width="6" height="1.2" fill="#ffffff"/><rect x="901.25" y="586.5" width="6" height="1.2" fill="#ffffff"/><rect x="901.75" y="589.4" width="5" height="1.2" fill="#ffffff"/><rect x="903.65" y="586.5" width="1.2" height="7" fill="#ffffff"/><rect x="901.25" y="592.3" width="6" height="1.2" fill="#ffffff"/><rect x="908.75" y="586.5" width="6" height="1.2" fill="#ffffff"/><rect x="909.25" y="589.4" width="5" height="1.2" fill="#ffffff"/><rect x="911.15" y="586.5" width="1.2" height="7" fill="#ffffff"/><rect x="908.75" y="592.3" width="6" height="1.2" fill="#ffffff"/><text x="927" y="592.9" font-size="8.2" fill="#ffffff" text-anchor="start" font-style="italic" textLength="4" lengthAdjust="spacingAndGlyphs">4</text><text x="942.2" y="592.9" font-size="8.2" fill="#ffffff" text-anchor="start" font-style="italic" textLength="17.6" lengthAdjust="spacingAndGlyphs">65Mn</text><text x="977.4" y="592.9" font-size="8.2" fill="#ffffff" text-anchor="start" font-style="italic" textLength="32.199999999999996" lengthAdjust="spacingAndGlyphs">GB93-87</text><text x="868" y="600.9" font-size="8.2" fill="#ffffff" text-anchor="start" font-style="italic" textLength="8" lengthAdjust="spacingAndGlyphs">10</text><rect x="884" y="594.5" width="6" height="1.2" fill="#ffffff"/><rect x="884.5" y="597.4" width="5" height="1.2" fill="#ffffff"/><rect x="886.4" y="594.5" width="1.2" height="7" fill="#ffffff"/><rect x="884" y="600.3" width="6" height="1.2" fill="#ffffff"/><text x="892" y="600.9" font-size="8.2" fill="#ffffff" text-anchor="start" font-style="italic" textLength="19" lengthAdjust="spacingAndGlyphs">M16x70</text><text x="927" y="600.9" font-size="8.2" fill="#ffffff" text-anchor="start" font-style="italic" textLength="4" lengthAdjust="spacingAndGlyphs">4</text><text x="937.8" y="600.9" font-size="8.2" fill="#ffffff" text-anchor="start" font-style="italic" textLength="26.400000000000002" lengthAdjust="spacingAndGlyphs">Q235-A</text><text x="972.8" y="600.9" font-size="8.2" fill="#ffffff" text-anchor="start" font-style="italic" textLength="41.4" lengthAdjust="spacingAndGlyphs">GB5782-86</text><text x="870" y="609.9" font-size="8.2" fill="#ffffff" text-anchor="start" font-style="italic" textLength="4" lengthAdjust="spacingAndGlyphs">9</text><rect x="893.75" y="603.5" width="6" height="1.2" fill="#ffffff"/><rect x="894.25" y="606.4" width="5" height="1.2" fill="#ffffff"/><rect x="896.15" y="603.5" width="1.2" height="7" fill="#ffffff"/><rect x="893.75" y="604.5" width="1.2" height="6" fill="#ffffff"/><rect x="893.75" y="609.3" width="6" height="1.2" fill="#ffffff"/><rect x="901.25" y="603.5" width="6" height="1.2" fill="#ffffff"/><rect x="901.75" y="606.4" width="5" height="1.2" fill="#ffffff"/><rect x="903.65" y="603.5" width="1.2" height="7" fill="#ffffff"/><rect x="901.25" y="604.5" width="1.2" height="6" fill="#ffffff"/><rect x="906.05" y="607" width="1.2" height="3.5" fill="#ffffff"/><rect x="901.25" y="609.3" width="6" height="1.2" fill="#ffffff"/><text x="927" y="609.9" font-size="8.2" fill="#ffffff" text-anchor="start" font-style="italic" textLength="4" lengthAdjust="spacingAndGlyphs">1</text><text x="944" y="609.9" font-size="8.2" fill="#ffffff" text-anchor="start" font-style="italic" textLength="8" lengthAdjust="spacingAndGlyphs">45</text><rect x="953" y="603.5" width="6" height="1.2" fill="#ffffff"/><rect x="953.5" y="606.4" width="5" height="1.2" fill="#ffffff"/><rect x="955.4" y="603.5" width="1.2" height="7" fill="#ffffff"/><rect x="953" y="604.5" width="1.2" height="6" fill="#ffffff"/><rect x="957.8" y="607" width="1.2" height="3.5" fill="#ffffff"/><rect x="953" y="609.3" width="6" height="1.2" fill="#ffffff"/><text x="870" y="617.9" font-size="8.2" fill="#ffffff" text-anchor="start" font-style="italic" textLength="4" lengthAdjust="spacingAndGlyphs">8</text><rect x="893.75" y="611.5" width="6" height="1.2" fill="#ffffff"/><rect x="894.25" y="614.4" width="5" height="1.2" fill="#ffffff"/><rect x="896.15" y="611.5" width="1.2" height="7" fill="#ffffff"/><rect x="898.55" y="615" width="1.2" height="3.5" fill="#ffffff"/><rect x="893.75" y="617.3" width="6" height="1.2" fill="#ffffff"/><rect x="901.25" y="611.5" width="6" height="1.2" fill="#ffffff"/><rect x="901.75" y="614.4" width="5" height="1.2" fill="#ffffff"/><rect x="903.65" y="611.5" width="1.2" height="7" fill="#ffffff"/><rect x="901.25" y="612.5" width="1.2" height="6" fill="#ffffff"/><rect x="906.05" y="615" width="1.2" height="3.5" fill="#ffffff"/><rect x="901.25" y="617.3" width="6" height="1.2" fill="#ffffff"/><text x="927" y="617.9" font-size="8.2" fill="#ffffff" text-anchor="start" font-style="italic" textLength="4" lengthAdjust="spacingAndGlyphs">1</text><text x="944" y="617.9" font-size="8.2" fill="#ffffff" text-anchor="start" font-style="italic" textLength="8" lengthAdjust="spacingAndGlyphs">45</text><rect x="953" y="611.5" width="6" height="1.2" fill="#ffffff"/><rect x="953.5" y="614.4" width="5" height="1.2" fill="#ffffff"/><rect x="955.4" y="611.5" width="1.2" height="7" fill="#ffffff"/><rect x="953" y="612.5" width="1.2" height="6" fill="#ffffff"/><rect x="957.8" y="615" width="1.2" height="3.5" fill="#ffffff"/><rect x="953" y="617.3" width="6" height="1.2" fill="#ffffff"/><text x="870" y="626.9" font-size="8.2" fill="#ffffff" text-anchor="start" font-style="italic" textLength="4" lengthAdjust="spacingAndGlyphs">7</text><rect x="893.75" y="620.5" width="6" height="1.2" fill="#ffffff"/><rect x="894.25" y="623.4" width="5" height="1.2" fill="#ffffff"/><rect x="896.15" y="620.5" width="1.2" height="7" fill="#ffffff"/><rect x="898.55" y="624" width="1.2" height="3.5" fill="#ffffff"/><rect x="893.75" y="626.3" width="6" height="1.2" fill="#ffffff"/><rect x="901.25" y="620.5" width="6" height="1.2" fill="#ffffff"/><rect x="901.75" y="623.4" width="5" height="1.2" fill="#ffffff"/><rect x="903.65" y="620.5" width="1.2" height="7" fill="#ffffff"/><rect x="906.05" y="624" width="1.2" height="3.5" fill="#ffffff"/><rect x="901.25" y="626.3" width="6" height="1.2" fill="#ffffff"/><text x="927" y="626.9" font-size="8.2" fill="#ffffff" text-anchor="start" font-style="italic" textLength="4" lengthAdjust="spacingAndGlyphs">1</text><rect x="937" y="620.5" width="6" height="1.2" fill="#ffffff"/><rect x="937.5" y="623.4" width="5" height="1.2" fill="#ffffff"/><rect x="939.4" y="620.5" width="1.2" height="7" fill="#ffffff"/><rect x="937" y="621.5" width="1.2" height="6" fill="#ffffff"/><rect x="937" y="626.3" width="6" height="1.2" fill="#ffffff"/><rect x="944.5" y="620.5" width="6" height="1.2" fill="#ffffff"/><rect x="945" y="623.4" width="5" height="1.2" fill="#ffffff"/><rect x="946.9" y="620.5" width="1.2" height="7" fill="#ffffff"/><rect x="944.5" y="621.5" width="1.2" height="6" fill="#ffffff"/><rect x="944.5" y="626.3" width="6" height="1.2" fill="#ffffff"/><rect x="952" y="620.5" width="6" height="1.2" fill="#ffffff"/><rect x="952.5" y="623.4" width="5" height="1.2" fill="#ffffff"/><rect x="954.4" y="620.5" width="1.2" height="7" fill="#ffffff"/><rect x="952" y="621.5" width="1.2" height="6" fill="#ffffff"/><rect x="952" y="626.3" width="6" height="1.2" fill="#ffffff"/><rect x="959.5" y="620.5" width="6" height="1.2" fill="#ffffff"/><rect x="960" y="623.4" width="5" height="1.2" fill="#ffffff"/><rect x="961.9" y="620.5" width="1.2" height="7" fill="#ffffff"/><rect x="959.5" y="626.3" width="6" height="1.2" fill="#ffffff"/><text x="969.5" y="626.9" font-size="8.2" fill="#ffffff" text-anchor="start" font-style="italic" textLength="48" lengthAdjust="spacingAndGlyphs">GB3452.1-92</text><text x="870" y="634.9" font-size="8.2" fill="#ffffff" text-anchor="start" font-style="italic" textLength="4" lengthAdjust="spacingAndGlyphs">6</text><rect x="893.75" y="628.5" width="6" height="1.2" fill="#ffffff"/><rect x="894.25" y="631.4" width="5" height="1.2" fill="#ffffff"/><rect x="896.15" y="628.5" width="1.2" height="7" fill="#ffffff"/><rect x="898.55" y="632" width="1.2" height="3.5" fill="#ffffff"/><rect x="893.75" y="634.3" width="6" height="1.2" fill="#ffffff"/><rect x="901.25" y="628.5" width="6" height="1.2" fill="#ffffff"/><rect x="901.75" y="631.4" width="5" height="1.2" fill="#ffffff"/><rect x="903.65" y="628.5" width="1.2" height="7" fill="#ffffff"/><rect x="901.25" y="629.5" width="1.2" height="6" fill="#ffffff"/><rect x="906.05" y="632" width="1.2" height="3.5" fill="#ffffff"/><rect x="901.25" y="634.3" width="6" height="1.2" fill="#ffffff"/><text x="927" y="634.9" font-size="8.2" fill="#ffffff" text-anchor="start" font-style="italic" textLength="4" lengthAdjust="spacingAndGlyphs">2</text><rect x="937" y="628.5" width="6" height="1.2" fill="#ffffff"/><rect x="937.5" y="631.4" width="5" height="1.2" fill="#ffffff"/><rect x="939.4" y="628.5" width="1.2" height="7" fill="#ffffff"/><rect x="941.8" y="632" width="1.2" height="3.5" fill="#ffffff"/><rect x="937" y="634.3" width="6" height="1.2" fill="#ffffff"/><rect x="944.5" y="628.5" width="6" height="1.2" fill="#ffffff"/><rect x="945" y="631.4" width="5" height="1.2" fill="#ffffff"/><rect x="946.9" y="628.5" width="1.2" height="7" fill="#ffffff"/><rect x="944.5" y="629.5" width="1.2" height="6" fill="#ffffff"/><rect x="949.3" y="632" width="1.2" height="3.5" fill="#ffffff"/><rect x="944.5" y="634.3" width="6" height="1.2" fill="#ffffff"/><rect x="952" y="628.5" width="6" height="1.2" fill="#ffffff"/><rect x="952.5" y="631.4" width="5" height="1.2" fill="#ffffff"/><rect x="954.4" y="628.5" width="1.2" height="7" fill="#ffffff"/><rect x="956.8" y="632" width="1.2" height="3.5" fill="#ffffff"/><rect x="952" y="634.3" width="6" height="1.2" fill="#ffffff"/><rect x="959.5" y="628.5" width="6" height="1.2" fill="#ffffff"/><rect x="960" y="631.4" width="5" height="1.2" fill="#ffffff"/><rect x="961.9" y="628.5" width="1.2" height="7" fill="#ffffff"/><rect x="959.5" y="634.3" width="6" height="1.2" fill="#ffffff"/><text x="969.5" y="634.9" font-size="8.2" fill="#ffffff" text-anchor="start" font-style="italic" textLength="48" lengthAdjust="spacingAndGlyphs">GB3452.1-92</text><text x="870" y="643.9" font-size="8.2" fill="#ffffff" text-anchor="start" font-style="italic" textLength="4" lengthAdjust="spacingAndGlyphs">5</text><text x="884" y="643.9" font-size="8.2" fill="#ffffff" text-anchor="start" font-style="italic" textLength="5" lengthAdjust="spacingAndGlyphs">O</text><rect x="890" y="637.5" width="6" height="1.2" fill="#ffffff"/><rect x="890.5" y="640.4" width="5" height="1.2" fill="#ffffff"/><rect x="892.4" y="637.5" width="1.2" height="7" fill="#ffffff"/><rect x="890" y="643.3" width="6" height="1.2" fill="#ffffff"/><rect x="897.5" y="637.5" width="6" height="1.2" fill="#ffffff"/><rect x="898" y="640.4" width="5" height="1.2" fill="#ffffff"/><rect x="899.9" y="637.5" width="1.2" height="7" fill="#ffffff"/><rect x="897.5" y="638.5" width="1.2" height="6" fill="#ffffff"/><rect x="902.3" y="641" width="1.2" height="3.5" fill="#ffffff"/><rect x="897.5" y="643.3" width="6" height="1.2" fill="#ffffff"/><rect x="905" y="637.5" width="6" height="1.2" fill="#ffffff"/><rect x="905.5" y="640.4" width="5" height="1.2" fill="#ffffff"/><rect x="907.4" y="637.5" width="1.2" height="7" fill="#ffffff"/><rect x="905" y="638.5" width="1.2" height="6" fill="#ffffff"/><rect x="905" y="643.3" width="6" height="1.2" fill="#ffffff"/><text x="927" y="643.9" font-size="8.2" fill="#ffffff" text-anchor="start" font-style="italic" textLength="4" lengthAdjust="spacingAndGlyphs">4</text><rect x="937" y="637.5" width="6" height="1.2" fill="#ffffff"/><rect x="937.5" y="640.4" width="5" height="1.2" fill="#ffffff"/><rect x="939.4" y="637.5" width="1.2" height="7" fill="#ffffff"/><rect x="941.8" y="641" width="1.2" height="3.5" fill="#ffffff"/><rect x="937" y="643.3" width="6" height="1.2" fill="#ffffff"/><rect x="944.5" y="637.5" width="6" height="1.2" fill="#ffffff"/><rect x="945" y="640.4" width="5" height="1.2" fill="#ffffff"/><rect x="946.9" y="637.5" width="1.2" height="7" fill="#ffffff"/><rect x="944.5" y="638.5" width="1.2" height="6" fill="#ffffff"/><rect x="944.5" y="643.3" width="6" height="1.2" fill="#ffffff"/><rect x="952" y="637.5" width="6" height="1.2" fill="#ffffff"/><rect x="952.5" y="640.4" width="5" height="1.2" fill="#ffffff"/><rect x="954.4" y="637.5" width="1.2" height="7" fill="#ffffff"/><rect x="952" y="638.5" width="1.2" height="6" fill="#ffffff"/><rect x="956.8" y="641" width="1.2" height="3.5" fill="#ffffff"/><rect x="952" y="643.3" width="6" height="1.2" fill="#ffffff"/><rect x="959.5" y="637.5" width="6" height="1.2" fill="#ffffff"/><rect x="960" y="640.4" width="5" height="1.2" fill="#ffffff"/><rect x="961.9" y="637.5" width="1.2" height="7" fill="#ffffff"/><rect x="959.5" y="638.5" width="1.2" height="6" fill="#ffffff"/><rect x="964.3" y="641" width="1.2" height="3.5" fill="#ffffff"/><rect x="959.5" y="643.3" width="6" height="1.2" fill="#ffffff"/><text x="969.5" y="643.9" font-size="8.2" fill="#ffffff" text-anchor="start" font-style="italic" textLength="48" lengthAdjust="spacingAndGlyphs">GB3452.1-92</text><text x="870" y="651.9" font-size="8.2" fill="#ffffff" text-anchor="start" font-style="italic" textLength="4" lengthAdjust="spacingAndGlyphs">4</text><text x="884" y="651.9" font-size="8.2" fill="#ffffff" text-anchor="start" font-style="italic" textLength="5" lengthAdjust="spacingAndGlyphs">O</text><rect x="890" y="645.5" width="6" height="1.2" fill="#ffffff"/><rect x="890.5" y="648.4" width="5" height="1.2" fill="#ffffff"/><rect x="892.4" y="645.5" width="1.2" height="7" fill="#ffffff"/><rect x="890" y="651.3" width="6" height="1.2" fill="#ffffff"/><rect x="897.5" y="645.5" width="6" height="1.2" fill="#ffffff"/><rect x="898" y="648.4" width="5" height="1.2" fill="#ffffff"/><rect x="899.9" y="645.5" width="1.2" height="7" fill="#ffffff"/><rect x="897.5" y="651.3" width="6" height="1.2" fill="#ffffff"/><rect x="905" y="645.5" width="6" height="1.2" fill="#ffffff"/><rect x="905.5" y="648.4" width="5" height="1.2" fill="#ffffff"/><rect x="907.4" y="645.5" width="1.2" height="7" fill="#ffffff"/><rect x="909.8" y="649" width="1.2" height="3.5" fill="#ffffff"/><rect x="905" y="651.3" width="6" height="1.2" fill="#ffffff"/><text x="927" y="651.9" font-size="8.2" fill="#ffffff" text-anchor="start" font-style="italic" textLength="4" lengthAdjust="spacingAndGlyphs">2</text><rect x="937" y="645.5" width="6" height="1.2" fill="#ffffff"/><rect x="937.5" y="648.4" width="5" height="1.2" fill="#ffffff"/><rect x="939.4" y="645.5" width="1.2" height="7" fill="#ffffff"/><rect x="941.8" y="649" width="1.2" height="3.5" fill="#ffffff"/><rect x="937" y="651.3" width="6" height="1.2" fill="#ffffff"/><rect x="944.5" y="645.5" width="6" height="1.2" fill="#ffffff"/><rect x="945" y="648.4" width="5" height="1.2" fill="#ffffff"/><rect x="946.9" y="645.5" width="1.2" height="7" fill="#ffffff"/><rect x="949.3" y="649" width="1.2" height="3.5" fill="#ffffff"/><rect x="944.5" y="651.3" width="6" height="1.2" fill="#ffffff"/><rect x="952" y="645.5" width="6" height="1.2" fill="#ffffff"/><rect x="952.5" y="648.4" width="5" height="1.2" fill="#ffffff"/><rect x="954.4" y="645.5" width="1.2" height="7" fill="#ffffff"/><rect x="952" y="646.5" width="1.2" height="6" fill="#ffffff"/><rect x="956.8" y="649" width="1.2" height="3.5" fill="#ffffff"/><rect x="952" y="651.3" width="6" height="1.2" fill="#ffffff"/><rect x="959.5" y="645.5" width="6" height="1.2" fill="#ffffff"/><rect x="960" y="648.4" width="5" height="1.2" fill="#ffffff"/><rect x="961.9" y="645.5" width="1.2" height="7" fill="#ffffff"/><rect x="959.5" y="646.5" width="1.2" height="6" fill="#ffffff"/><rect x="964.3" y="649" width="1.2" height="3.5" fill="#ffffff"/><rect x="959.5" y="651.3" width="6" height="1.2" fill="#ffffff"/><text x="969.5" y="651.9" font-size="8.2" fill="#ffffff" text-anchor="start" font-style="italic" textLength="48" lengthAdjust="spacingAndGlyphs">GB3452.1-92</text><text x="870" y="660.9" font-size="8.2" fill="#ffffff" text-anchor="start" font-style="italic" textLength="4" lengthAdjust="spacingAndGlyphs">3</text><rect x="893.75" y="654.5" width="6" height="1.2" fill="#ffffff"/><rect x="894.25" y="657.4" width="5" height="1.2" fill="#ffffff"/><rect x="896.15" y="654.5" width="1.2" height="7" fill="#ffffff"/><rect x="893.75" y="660.3" width="6" height="1.2" fill="#ffffff"/><rect x="901.25" y="654.5" width="6" height="1.2" fill="#ffffff"/><rect x="901.75" y="657.4" width="5" height="1.2" fill="#ffffff"/><rect x="903.65" y="654.5" width="1.2" height="7" fill="#ffffff"/><rect x="901.25" y="660.3" width="6" height="1.2" fill="#ffffff"/><text x="927" y="660.9" font-size="8.2" fill="#ffffff" text-anchor="start" font-style="italic" textLength="4" lengthAdjust="spacingAndGlyphs">1</text><text x="940" y="660.9" font-size="8.2" fill="#ffffff" text-anchor="start" font-style="italic" textLength="22.0" lengthAdjust="spacingAndGlyphs">HT200</text><text x="870" y="668.9" font-size="8.2" fill="#ffffff" text-anchor="start" font-style="italic" textLength="4" lengthAdjust="spacingAndGlyphs">2</text><rect x="890" y="662.5" width="6" height="1.2" fill="#ffffff"/><rect x="890.5" y="665.4" width="5" height="1.2" fill="#ffffff"/><rect x="892.4" y="662.5" width="1.2" height="7" fill="#ffffff"/><rect x="894.8" y="666" width="1.2" height="3.5" fill="#ffffff"/><rect x="890" y="668.3" width="6" height="1.2" fill="#ffffff"/><rect x="897.5" y="662.5" width="6" height="1.2" fill="#ffffff"/><rect x="898" y="665.4" width="5" height="1.2" fill="#ffffff"/><rect x="899.9" y="662.5" width="1.2" height="7" fill="#ffffff"/><rect x="897.5" y="663.5" width="1.2" height="6" fill="#ffffff"/><rect x="902.3" y="666" width="1.2" height="3.5" fill="#ffffff"/><rect x="897.5" y="668.3" width="6" height="1.2" fill="#ffffff"/><rect x="905" y="662.5" width="6" height="1.2" fill="#ffffff"/><rect x="905.5" y="665.4" width="5" height="1.2" fill="#ffffff"/><rect x="907.4" y="662.5" width="1.2" height="7" fill="#ffffff"/><rect x="905" y="668.3" width="6" height="1.2" fill="#ffffff"/><text x="927" y="668.9" font-size="8.2" fill="#ffffff" text-anchor="start" font-style="italic" textLength="4" lengthAdjust="spacingAndGlyphs">1</text><text x="944" y="668.9" font-size="8.2" fill="#ffffff" text-anchor="start" font-style="italic" textLength="8" lengthAdjust="spacingAndGlyphs">45</text><rect x="953" y="662.5" width="6" height="1.2" fill="#ffffff"/><rect x="953.5" y="665.4" width="5" height="1.2" fill="#ffffff"/><rect x="955.4" y="662.5" width="1.2" height="7" fill="#ffffff"/><rect x="953" y="668.3" width="6" height="1.2" fill="#ffffff"/><text x="870" y="677.9" font-size="8.2" fill="#ffffff" text-anchor="start" font-style="italic" textLength="4" lengthAdjust="spacingAndGlyphs">1</text><rect x="890" y="671.5" width="6" height="1.2" fill="#ffffff"/><rect x="890.5" y="674.4" width="5" height="1.2" fill="#ffffff"/><rect x="892.4" y="671.5" width="1.2" height="7" fill="#ffffff"/><rect x="894.8" y="675" width="1.2" height="3.5" fill="#ffffff"/><rect x="890" y="677.3" width="6" height="1.2" fill="#ffffff"/><rect x="897.5" y="671.5" width="6" height="1.2" fill="#ffffff"/><rect x="898" y="674.4" width="5" height="1.2" fill="#ffffff"/><rect x="899.9" y="671.5" width="1.2" height="7" fill="#ffffff"/><rect x="897.5" y="672.5" width="1.2" height="6" fill="#ffffff"/><rect x="902.3" y="675" width="1.2" height="3.5" fill="#ffffff"/><rect x="897.5" y="677.3" width="6" height="1.2" fill="#ffffff"/><rect x="905" y="671.5" width="6" height="1.2" fill="#ffffff"/><rect x="905.5" y="674.4" width="5" height="1.2" fill="#ffffff"/><rect x="907.4" y="671.5" width="1.2" height="7" fill="#ffffff"/><rect x="909.8" y="675" width="1.2" height="3.5" fill="#ffffff"/><rect x="905" y="677.3" width="6" height="1.2" fill="#ffffff"/><text x="927" y="677.9" font-size="8.2" fill="#ffffff" text-anchor="start" font-style="italic" textLength="4" lengthAdjust="spacingAndGlyphs">1</text><text x="944" y="677.9" font-size="8.2" fill="#ffffff" text-anchor="start" font-style="italic" textLength="8" lengthAdjust="spacingAndGlyphs">45</text><rect x="953" y="671.5" width="6" height="1.2" fill="#ffffff"/><rect x="953.5" y="674.4" width="5" height="1.2" fill="#ffffff"/><rect x="955.4" y="671.5" width="1.2" height="7" fill="#ffffff"/><rect x="953" y="672.5" width="1.2" height="6" fill="#ffffff"/><rect x="957.8" y="675" width="1.2" height="3.5" fill="#ffffff"/><rect x="953" y="677.3" width="6" height="1.2" fill="#ffffff"/><rect x="868" y="679.5" width="5" height="1.2" fill="#ffffff"/><rect x="868.5" y="682.4" width="4" height="1.2" fill="#ffffff"/><rect x="869.9" y="679.5" width="1.2" height="7" fill="#ffffff"/><rect x="871.8" y="683" width="1.2" height="3.5" fill="#ffffff"/><rect x="868" y="685.3" width="5" height="1.2" fill="#ffffff"/><rect x="873.5" y="679.5" width="5" height="1.2" fill="#ffffff"/><rect x="874" y="682.4" width="4" height="1.2" fill="#ffffff"/><rect x="875.4" y="679.5" width="1.2" height="7" fill="#ffffff"/><rect x="873.5" y="685.3" width="5" height="1.2" fill="#ffffff"/><rect x="884" y="679.5" width="6" height="1.2" fill="#ffffff"/><rect x="884.5" y="682.4" width="5" height="1.2" fill="#ffffff"/><rect x="886.4" y="679.5" width="1.2" height="7" fill="#ffffff"/><rect x="884" y="680.5" width="1.2" height="6" fill="#ffffff"/><rect x="888.8" y="683" width="1.2" height="3.5" fill="#ffffff"/><rect x="884" y="685.3" width="6" height="1.2" fill="#ffffff"/><rect x="904" y="679.5" width="6" height="1.2" fill="#ffffff"/><rect x="904.5" y="682.4" width="5" height="1.2" fill="#ffffff"/><rect x="906.4" y="679.5" width="1.2" height="7" fill="#ffffff"/><rect x="908.8" y="683" width="1.2" height="3.5" fill="#ffffff"/><rect x="904" y="685.3" width="6" height="1.2" fill="#ffffff"/><rect x="923" y="679.5" width="5" height="1.2" fill="#ffffff"/><rect x="923.5" y="682.4" width="4" height="1.2" fill="#ffffff"/><rect x="924.9" y="679.5" width="1.2" height="7" fill="#ffffff"/><rect x="923" y="680.5" width="1.2" height="6" fill="#ffffff"/><rect x="923" y="685.3" width="5" height="1.2" fill="#ffffff"/><rect x="928.5" y="679.5" width="5" height="1.2" fill="#ffffff"/><rect x="929" y="682.4" width="4" height="1.2" fill="#ffffff"/><rect x="930.4" y="679.5" width="1.2" height="7" fill="#ffffff"/><rect x="928.5" y="685.3" width="5" height="1.2" fill="#ffffff"/><rect x="941" y="679.5" width="6" height="1.2" fill="#ffffff"/><rect x="941.5" y="682.4" width="5" height="1.2" fill="#ffffff"/><rect x="943.4" y="679.5" width="1.2" height="7" fill="#ffffff"/><rect x="941" y="680.5" width="1.2" height="6" fill="#ffffff"/><rect x="945.8" y="683" width="1.2" height="3.5" fill="#ffffff"/><rect x="941" y="685.3" width="6" height="1.2" fill="#ffffff"/><rect x="955" y="679.5" width="6" height="1.2" fill="#ffffff"/><rect x="955.5" y="682.4" width="5" height="1.2" fill="#ffffff"/><rect x="957.4" y="679.5" width="1.2" height="7" fill="#ffffff"/><rect x="955" y="685.3" width="6" height="1.2" fill="#ffffff"/><rect x="979" y="679.5" width="6" height="1.2" fill="#ffffff"/><rect x="979.5" y="682.4" width="5" height="1.2" fill="#ffffff"/><rect x="981.4" y="679.5" width="1.2" height="7" fill="#ffffff"/><rect x="979" y="680.5" width="1.2" height="6" fill="#ffffff"/><rect x="979" y="685.3" width="6" height="1.2" fill="#ffffff"/><rect x="1000" y="679.5" width="6" height="1.2" fill="#ffffff"/><rect x="1000.5" y="682.4" width="5" height="1.2" fill="#ffffff"/><rect x="1002.4" y="679.5" width="1.2" height="7" fill="#ffffff"/><rect x="1004.8" y="683" width="1.2" height="3.5" fill="#ffffff"/><rect x="1000" y="685.3" width="6" height="1.2" fill="#ffffff"/><rect x="926" y="697" width="5.2" height="1.2" fill="#ffffff"/><rect x="926.5" y="700.4" width="4.2" height="1.2" fill="#ffffff"/><rect x="928" y="697" width="1.2" height="8" fill="#ffffff"/><rect x="926" y="698" width="1.2" height="7" fill="#ffffff"/><rect x="926" y="703.8" width="5.2" height="1.2" fill="#ffffff"/><rect x="932.2" y="697" width="5.2" height="1.2" fill="#ffffff"/><rect x="932.7" y="700.4" width="4.2" height="1.2" fill="#ffffff"/><rect x="934.2" y="697" width="1.2" height="8" fill="#ffffff"/><rect x="932.2" y="698" width="1.2" height="7" fill="#ffffff"/><rect x="932.2" y="703.8" width="5.2" height="1.2" fill="#ffffff"/><rect x="938.4" y="697" width="5.2" height="1.2" fill="#ffffff"/><rect x="938.9" y="700.4" width="4.2" height="1.2" fill="#ffffff"/><rect x="940.4" y="697" width="1.2" height="8" fill="#ffffff"/><rect x="938.4" y="698" width="1.2" height="7" fill="#ffffff"/><rect x="942.4" y="701" width="1.2" height="4" fill="#ffffff"/><rect x="938.4" y="703.8" width="5.2" height="1.2" fill="#ffffff"/><rect x="944.6" y="697" width="5.2" height="1.2" fill="#ffffff"/><rect x="945.1" y="700.4" width="4.2" height="1.2" fill="#ffffff"/><rect x="946.6" y="697" width="1.2" height="8" fill="#ffffff"/><rect x="944.6" y="698" width="1.2" height="7" fill="#ffffff"/><rect x="948.6" y="701" width="1.2" height="4" fill="#ffffff"/><rect x="944.6" y="703.8" width="5.2" height="1.2" fill="#ffffff"/><rect x="950.8" y="697" width="5.2" height="1.2" fill="#ffffff"/><rect x="951.3" y="700.4" width="4.2" height="1.2" fill="#ffffff"/><rect x="952.8" y="697" width="1.2" height="8" fill="#ffffff"/><rect x="950.8" y="698" width="1.2" height="7" fill="#ffffff"/><rect x="954.8" y="701" width="1.2" height="4" fill="#ffffff"/><rect x="950.8" y="703.8" width="5.2" height="1.2" fill="#ffffff"/><rect x="957" y="697" width="5.2" height="1.2" fill="#ffffff"/><rect x="957.5" y="700.4" width="4.2" height="1.2" fill="#ffffff"/><rect x="959" y="697" width="1.2" height="8" fill="#ffffff"/><rect x="957" y="703.8" width="5.2" height="1.2" fill="#ffffff"/><rect x="930" y="716" width="5.2" height="1.2" fill="#ffffff"/><rect x="930.5" y="718.9" width="4.2" height="1.2" fill="#ffffff"/><rect x="932" y="716" width="1.2" height="7" fill="#ffffff"/><rect x="930" y="717" width="1.2" height="6" fill="#ffffff"/><rect x="930" y="721.8" width="5.2" height="1.2" fill="#ffffff"/><rect x="936" y="716" width="5.2" height="1.2" fill="#ffffff"/><rect x="936.5" y="718.9" width="4.2" height="1.2" fill="#ffffff"/><rect x="938" y="716" width="1.2" height="7" fill="#ffffff"/><rect x="936" y="717" width="1.2" height="6" fill="#ffffff"/><rect x="940" y="719.5" width="1.2" height="3.5" fill="#ffffff"/><rect x="936" y="721.8" width="5.2" height="1.2" fill="#ffffff"/><rect x="942" y="716" width="5.2" height="1.2" fill="#ffffff"/><rect x="942.5" y="718.9" width="4.2" height="1.2" fill="#ffffff"/><rect x="944" y="716" width="1.2" height="7" fill="#ffffff"/><rect x="942" y="717" width="1.2" height="6" fill="#ffffff"/><rect x="946" y="719.5" width="1.2" height="3.5" fill="#ffffff"/><rect x="942" y="721.8" width="5.2" height="1.2" fill="#ffffff"/><rect x="948" y="716" width="5.2" height="1.2" fill="#ffffff"/><rect x="948.5" y="718.9" width="4.2" height="1.2" fill="#ffffff"/><rect x="950" y="716" width="1.2" height="7" fill="#ffffff"/><rect x="952" y="719.5" width="1.2" height="3.5" fill="#ffffff"/><rect x="948" y="721.8" width="5.2" height="1.2" fill="#ffffff"/><rect x="954" y="716" width="5.2" height="1.2" fill="#ffffff"/><rect x="954.5" y="718.9" width="4.2" height="1.2" fill="#ffffff"/><rect x="956" y="716" width="1.2" height="7" fill="#ffffff"/><rect x="954" y="717" width="1.2" height="6" fill="#ffffff"/><rect x="954" y="721.8" width="5.2" height="1.2" fill="#ffffff"/><rect x="868" y="701" width="4.5" height="1" fill="#ffffff"/><rect x="868" y="704" width="4.5" height="1" fill="#ffffff"/><rect x="869.75" y="701" width="1" height="4" fill="#ffffff"/><rect x="876" y="701" width="4.5" height="1" fill="#ffffff"/><rect x="876" y="704" width="4.5" height="1" fill="#ffffff"/><rect x="877.75" y="701" width="1" height="4" fill="#ffffff"/><rect x="884" y="701" width="4.5" height="1" fill="#ffffff"/><rect x="884" y="704" width="4.5" height="1" fill="#ffffff"/><rect x="885.75" y="701" width="1" height="4" fill="#ffffff"/><rect x="889" y="701" width="4.5" height="1" fill="#ffffff"/><rect x="889" y="704" width="4.5" height="1" fill="#ffffff"/><rect x="890.75" y="701" width="1" height="4" fill="#ffffff"/><rect x="898" y="701" width="4.5" height="1" fill="#ffffff"/><rect x="898" y="704" width="4.5" height="1" fill="#ffffff"/><rect x="899.75" y="701" width="1" height="4" fill="#ffffff"/><rect x="903" y="701" width="4.5" height="1" fill="#ffffff"/><rect x="903" y="704" width="4.5" height="1" fill="#ffffff"/><rect x="904.75" y="701" width="1" height="4" fill="#ffffff"/><rect x="912" y="701" width="4.5" height="1" fill="#ffffff"/><rect x="912" y="704" width="4.5" height="1" fill="#ffffff"/><rect x="913.75" y="701" width="1" height="4" fill="#ffffff"/><rect x="917" y="701" width="4.5" height="1" fill="#ffffff"/><rect x="917" y="704" width="4.5" height="1" fill="#ffffff"/><rect x="918.75" y="701" width="1" height="4" fill="#ffffff"/><rect x="866" y="706" width="4.5" height="1" fill="#ffffff"/><rect x="866" y="709" width="4.5" height="1" fill="#ffffff"/><rect x="867.75" y="706" width="1" height="4" fill="#ffffff"/><rect x="872" y="706" width="4.5" height="1" fill="#ffffff"/><rect x="872" y="709" width="4.5" height="1" fill="#ffffff"/><rect x="873.75" y="706" width="1" height="4" fill="#ffffff"/><rect x="881" y="706" width="4.5" height="1" fill="#ffffff"/><rect x="881" y="709" width="4.5" height="1" fill="#ffffff"/><rect x="882.75" y="706" width="1" height="4" fill="#ffffff"/><rect x="886" y="706" width="4.5" height="1" fill="#ffffff"/><rect x="886" y="709" width="4.5" height="1" fill="#ffffff"/><rect x="887.75" y="706" width="1" height="4" fill="#ffffff"/><rect x="897" y="706" width="4.5" height="1" fill="#ffffff"/><rect x="897" y="709" width="4.5" height="1" fill="#ffffff"/><rect x="898.75" y="706" width="1" height="4" fill="#ffffff"/><rect x="902" y="706" width="4.5" height="1" fill="#ffffff"/><rect x="902" y="709" width="4.5" height="1" fill="#ffffff"/><rect x="903.75" y="706" width="1" height="4" fill="#ffffff"/><rect x="866" y="711" width="4.5" height="1" fill="#ffffff"/><rect x="866" y="714" width="4.5" height="1" fill="#ffffff"/><rect x="867.75" y="711" width="1" height="4" fill="#ffffff"/><rect x="872" y="711" width="4.5" height="1" fill="#ffffff"/><rect x="872" y="714" width="4.5" height="1" fill="#ffffff"/><rect x="873.75" y="711" width="1" height="4" fill="#ffffff"/><rect x="881" y="711" width="4.5" height="1" fill="#ffffff"/><rect x="881" y="714" width="4.5" height="1" fill="#ffffff"/><rect x="882.75" y="711" width="1" height="4" fill="#ffffff"/><rect x="886" y="711" width="4.5" height="1" fill="#ffffff"/><rect x="886" y="714" width="4.5" height="1" fill="#ffffff"/><rect x="887.75" y="711" width="1" height="4" fill="#ffffff"/><rect x="897" y="711" width="4.5" height="1" fill="#ffffff"/><rect x="897" y="714" width="4.5" height="1" fill="#ffffff"/><rect x="898.75" y="711" width="1" height="4" fill="#ffffff"/><rect x="902" y="711" width="4.5" height="1" fill="#ffffff"/><rect x="902" y="714" width="4.5" height="1" fill="#ffffff"/><rect x="903.75" y="711" width="1" height="4" fill="#ffffff"/><rect x="866" y="716" width="4.5" height="1" fill="#ffffff"/><rect x="866" y="719" width="4.5" height="1" fill="#ffffff"/><rect x="867.75" y="716" width="1" height="4" fill="#ffffff"/><rect x="872" y="716" width="4.5" height="1" fill="#ffffff"/><rect x="872" y="719" width="4.5" height="1" fill="#ffffff"/><rect x="873.75" y="716" width="1" height="4" fill="#ffffff"/><rect x="866" y="721" width="4.5" height="1" fill="#ffffff"/><rect x="866" y="724" width="4.5" height="1" fill="#ffffff"/><rect x="867.75" y="721" width="1" height="4" fill="#ffffff"/><rect x="872" y="721" width="4.5" height="1" fill="#ffffff"/><rect x="872" y="724" width="4.5" height="1" fill="#ffffff"/><rect x="873.75" y="721" width="1" height="4" fill="#ffffff"/><rect x="898" y="721" width="4.5" height="1" fill="#ffffff"/><rect x="898" y="724" width="4.5" height="1" fill="#ffffff"/><rect x="899.75" y="721" width="1" height="4" fill="#ffffff"/><rect x="968.5" y="699.5" width="4" height="1.2" fill="#ffffff"/><rect x="969" y="700.9" width="3" height="1.2" fill="#ffffff"/><rect x="969.9" y="699.5" width="1.2" height="4" fill="#ffffff"/><rect x="968.5" y="700.5" width="1.2" height="3" fill="#ffffff"/><rect x="971.3" y="701.5" width="1.2" height="2" fill="#ffffff"/><rect x="968.5" y="702.3" width="4" height="1.2" fill="#ffffff"/><rect x="975" y="699.5" width="1.5" height="4" fill="#ffffff"/><rect x="980.5" y="699.5" width="4" height="1.2" fill="#ffffff"/><rect x="981" y="700.9" width="3" height="1.2" fill="#ffffff"/><rect x="981.9" y="699.5" width="1.2" height="4" fill="#ffffff"/><rect x="983.3" y="701.5" width="1.2" height="2" fill="#ffffff"/><rect x="980.5" y="702.3" width="4" height="1.2" fill="#ffffff"/><rect x="987" y="699.5" width="1.5" height="4" fill="#ffffff"/><rect x="993.5" y="699.5" width="4" height="1.2" fill="#ffffff"/><rect x="994" y="700.9" width="3" height="1.2" fill="#ffffff"/><rect x="994.9" y="699.5" width="1.2" height="4" fill="#ffffff"/><rect x="993.5" y="700.5" width="1.2" height="3" fill="#ffffff"/><rect x="996.3" y="701.5" width="1.2" height="2" fill="#ffffff"/><rect x="993.5" y="702.3" width="4" height="1.2" fill="#ffffff"/><rect x="1000" y="699.5" width="1.5" height="4" fill="#ffffff"/><rect x="1006.5" y="699.5" width="4" height="1.2" fill="#ffffff"/><rect x="1007" y="700.9" width="3" height="1.2" fill="#ffffff"/><rect x="1007.9" y="699.5" width="1.2" height="4" fill="#ffffff"/><rect x="1009.3" y="701.5" width="1.2" height="2" fill="#ffffff"/><rect x="1006.5" y="702.3" width="4" height="1.2" fill="#ffffff"/><rect x="1013" y="699.5" width="1.5" height="4" fill="#ffffff"/><text x="985" y="709.5" font-size="6.5" fill="#ffffff" text-anchor="start" font-style="italic" textLength="4" lengthAdjust="spacingAndGlyphs">1</text><text x="1008" y="709.5" font-size="6.5" fill="#ffffff" text-anchor="start" font-style="italic" textLength="7" lengthAdjust="spacingAndGlyphs">1:5</text><rect x="968" y="711.5" width="4" height="1.2" fill="#ffffff"/><rect x="968.5" y="712.65" width="3" height="1.2" fill="#ffffff"/><rect x="969.4" y="711.5" width="1.2" height="3.5" fill="#ffffff"/><rect x="968" y="712.5" width="1.2" height="2.5" fill="#ffffff"/><rect x="970.8" y="713.25" width="1.2" height="1.75" fill="#ffffff"/><rect x="968" y="713.8" width="4" height="1.2" fill="#ffffff"/><rect x="981" y="711.5" width="4" height="1.2" fill="#ffffff"/><rect x="981.5" y="712.65" width="3" height="1.2" fill="#ffffff"/><rect x="982.4" y="711.5" width="1.2" height="3.5" fill="#ffffff"/><rect x="981" y="712.5" width="1.2" height="2.5" fill="#ffffff"/><rect x="981" y="713.8" width="4" height="1.2" fill="#ffffff"/><rect x="994" y="711.5" width="4" height="1.2" fill="#ffffff"/><rect x="994.5" y="712.65" width="3" height="1.2" fill="#ffffff"/><rect x="995.4" y="711.5" width="1.2" height="3.5" fill="#ffffff"/><rect x="994" y="712.5" width="1.2" height="2.5" fill="#ffffff"/><rect x="994" y="713.8" width="4" height="1.2" fill="#ffffff"/><rect x="1007" y="711.5" width="4" height="1.2" fill="#ffffff"/><rect x="1007.5" y="712.65" width="3" height="1.2" fill="#ffffff"/><rect x="1008.4" y="711.5" width="1.2" height="3.5" fill="#ffffff"/><rect x="1007" y="713.8" width="4" height="1.2" fill="#ffffff"/><rect x="28" y="739" width="1012" height="1" fill="#d0d0d0" stroke="none"/><rect x="12" y="739" width="14" height="1" fill="#d0d0d0" stroke="none"/><rect x="0" y="739" width="2" height="1" fill="#d0d0d0" stroke="none"/></svg>
</body></html>
